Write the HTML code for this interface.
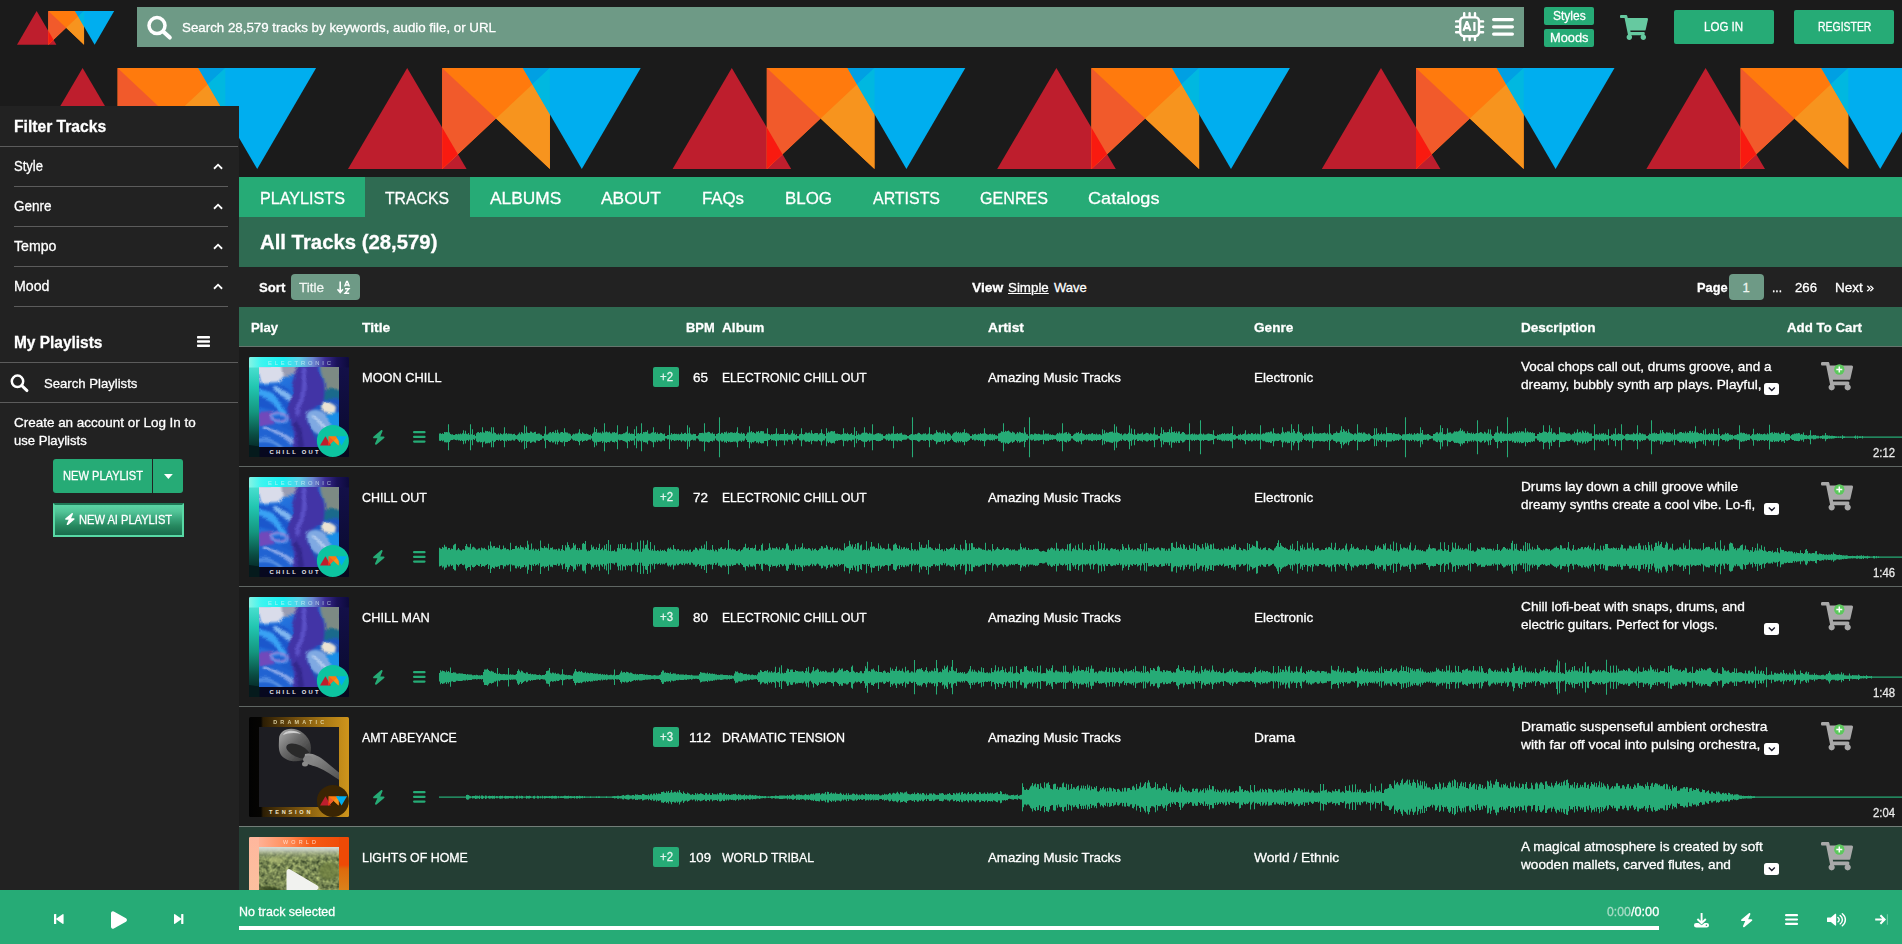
<!DOCTYPE html>
<html><head><meta charset="utf-8"><title>All Tracks</title>
<style>
*{box-sizing:border-box;margin:0;padding:0}
html,body{width:1902px;height:944px;overflow:hidden;background:#1b1b1b;color:#fff;font-family:"Liberation Sans",sans-serif;font-size:13px}
.a{position:absolute}
.t{position:absolute;white-space:nowrap;line-height:1;color:#fff;-webkit-text-stroke:.28px}
.b{font-weight:bold}
svg{position:absolute;overflow:visible}
.g{background:#26ab76}
.hl{position:absolute;height:1px;background:#5c5c5c}
.rowb{position:absolute;left:239px;width:1663px;height:1px;background:#555}
.dd{position:absolute;width:15px;height:12px;background:#fff;border-radius:2.5px}
</style></head><body>
<svg width="0" height="0"><defs>
<g id="lg">
<polygon points="0,101.4 59.2,0 118.6,101.4" fill="#be1e2d"/>
<polygon points="94.2,0 201.9,0 201.9,101.4 148,50.7 94.2,101.4" fill="#ff7a0d"/>
<polygon points="94.2,0 94.2,101.4 148,50.7" fill="#f15a2b"/>
<polygon points="201.9,0 201.9,101.4 148,50.7" fill="#f7941e"/>
<polygon points="174.9,0 292.7,0 233.8,101.4" fill="#00aeef"/>
<polygon points="94.2,59.7 94.2,101.4 109.9,86.6" fill="#f91a10"/>
<polygon points="174.9,0 201.9,0 184.4,16.4" fill="#00a0e3"/>
<polygon points="184.4,16.4 201.9,0 201.9,46.500" fill="#00b8e0"/>
</g>
<path id="cart" d="M528.12 301.319l47.273-208C578.806 78.301 567.391 64 551.99 64H159.208l-9.166-44.81C147.758 8.021 137.93 0 126.529 0H24C10.745 0 0 10.745 0 24v16c0 13.255 10.745 24 24 24h69.883l70.248 343.435C147.325 417.1 136 435.222 136 456c0 30.928 25.072 56 56 56s56-25.072 56-56c0-15.674-6.447-29.835-16.824-40h209.647C430.447 426.165 424 440.326 424 456c0 30.928 25.072 56 56 56s56-25.072 56-56c0-22.172-12.888-41.332-31.579-50.405l5.517-24.276c3.413-15.018-8.002-29.319-23.403-29.319H218.117l-6.545-32h293.145c11.206 0 20.92-7.754 23.403-18.681z"/>
<path id="bolt" d="M349.4 44.6c5.9-13.7 1.5-29.7-10.6-38.5s-28.6-8-39.9 1.8l-256 224c-10 8.800-13.6 22.900-8.9 35.300S50.7 288 64 288H175.500L98.600 467.400c-5.900 13.700-1.500 29.700 10.600 38.500s28.600 8 39.900-1.800l256-224c10-8.800 13.600-22.900 8.900-35.300s-16.600-20.700-30-20.700H272.500L349.400 44.600z"/>
<g id="bars"><rect x="0" y="0" width="12.600" height="2.300" rx="1.100"/><rect x="0" y="4.700" width="12.600" height="2.300" rx="1.100"/><rect x="0" y="9.400" width="12.600" height="2.300" rx="1.100"/></g>
<g id="addcart"><use href="#cart" transform="scale(.0556)" fill="#a9a9a9"/><circle cx="18.300" cy="7.500" r="5.200" fill="#5cc85c"/><path d="M15.300 7.500h6M18.300 4.500v6" stroke="#fff" stroke-width="1.500"/></g>
<path id="chev" d="M1 6.750L5.050 2.700L9.100 6.750" fill="none" stroke="#fff" stroke-width="1.800"/>
<path id="ddc" d="M4.800 4.500L7.800 7.500L10.800 4.500" fill="none" stroke="#1a1a2a" stroke-width="1.400"/>
</defs></svg>
<svg width="0" height="0"><defs>
<linearGradient id="e_l" x1="0" y1="0" x2="0" y2="1"><stop offset="0" stop-color="#5cecdf"/><stop offset=".3" stop-color="#22c6b1"/><stop offset=".55" stop-color="#14967f"/><stop offset=".78" stop-color="#0a4c42"/><stop offset="1" stop-color="#031416"/></linearGradient>
<linearGradient id="e_t" x1="0" y1="0" x2="1" y2="0"><stop offset="0" stop-color="#86f4e4"/><stop offset=".12" stop-color="#3ef5f0"/><stop offset=".34" stop-color="#1cf0f2"/><stop offset=".5" stop-color="#5ad2e8"/><stop offset=".64" stop-color="#6c86d2"/><stop offset=".76" stop-color="#3c2c94"/><stop offset=".88" stop-color="#1a1258"/><stop offset="1" stop-color="#0d0a3c"/></linearGradient>
<linearGradient id="e_r" x1="0" y1="0" x2="0" y2="1"><stop offset="0" stop-color="#14104c"/><stop offset="1" stop-color="#090a2c"/></linearGradient>
<linearGradient id="e_in" x1="0" y1="0" x2="1" y2="1"><stop offset="0" stop-color="#2a86ea"/><stop offset=".5" stop-color="#1d5fd0"/><stop offset="1" stop-color="#2448a8"/></linearGradient>
<filter id="bl" x="-10%" y="-10%" width="120%" height="120%"><feGaussianBlur stdDeviation="1.300"/></filter>
<filter id="mb" x="-10%" y="-10%" width="120%" height="120%" color-interpolation-filters="sRGB"><feTurbulence type="fractalNoise" baseFrequency=".045" numOctaves="2" seed="5" result="n"/><feGaussianBlur in="SourceGraphic" stdDeviation=".9" result="b"/><feDisplacementMap in="b" in2="n" scale="9" xChannelSelector="R" yChannelSelector="G"/></filter>
<filter id="bl2" x="-10%" y="-10%" width="120%" height="120%"><feGaussianBlur stdDeviation=".700"/></filter>
<clipPath id="inclip"><rect x="10" y="10" width="80" height="80"/></clipPath>
<clipPath id="artclip"><rect width="100" height="100" rx="1.500"/></clipPath>
<g id="art1" clip-path="url(#artclip)">
<rect width="100" height="100" fill="url(#e_r)"/>
<rect x="0" y="0" width="10.500" height="100" fill="url(#e_l)"/>
<rect x="0" y="0" width="100" height="10.500" fill="url(#e_t)"/>
<rect x="10" y="89.500" width="90" height="10.500" fill="#07081f"/>
<polygon points="0,100 0,88 10.500,89.500 10.500,100" fill="#051a1c"/>
<g clip-path="url(#inclip)"><rect x="10" y="10" width="80" height="80" fill="url(#e_in)"/>
<g filter="url(#mb)">
<path d="M8 8H50L46 17L35 19L30 26L12 27z" fill="#d9dcea"/>
<path d="M34 8H52L46 18L36 19z" fill="#9a9db2"/>
<path d="M8 30L34 28L44 40L40 56L8 50z" fill="#1b57cc"/>
<path d="M10 33C22 35 32 44 40 54L36 57C28 48 20 42 8 40z" fill="#39a2f4"/>
<path d="M24 30C32 30 38 34 42 40L40 44C34 38 30 36 22 34z" fill="#7fb6f0"/>
<path d="M8 55L24 54L26 70L8 72z" fill="#7149ba"/>
<path d="M8 70L30 66L44 78L50 92H8z" fill="#2163d2"/>
<path d="M12 72C26 72 38 80 48 90" stroke="#a9bdf0" stroke-width="2.600" fill="none"/>
<path d="M10 84C20 82 28 86 34 92" stroke="#6ea4ec" stroke-width="2" fill="none"/>
<path d="M50 8C46 18 42 26 42 34C40 42 40 52 42 64C43 74 43 82 44 92H70C68 84 66 80 62 74C58 68 57 62 60 56C66 52 74 48 74.500 42C76 36 76 30 74 24C72 18 70 14 70 8z" fill="#4234a6"/>
<path d="M56 10C52 26 54 44 50 60" stroke="#5a50c6" stroke-width="5" fill="none"/>
<path d="M46 66C50 74 48 84 52 92" stroke="#33278c" stroke-width="6" fill="none"/>
<path d="M72 8H92V34H76C77 26 72 16 72 8z" fill="#7c8a84"/>
<path d="M76 34H92V42H75z" fill="#1a6a8c"/>
<path d="M74 45C80 44 86 46 89 50L88 56C82 57 76 56 73 52z" fill="#ece3d2"/>
<path d="M60 56C66 52 74 54 80 58L82 74C76 80 68 78 64 74C60 70 56 62 60 56z" fill="#7fa9e2"/>
<path d="M64 60C70 62 74 70 78 76" stroke="#dbe8f8" stroke-width="1.800" fill="none"/>
<path d="M78 57L92 55V71L82 72z" fill="#1a8fe8"/>
<path d="M70 78L92 72V92H70z" fill="#3a52b8"/>
<ellipse cx="31.500" cy="58.500" rx="8.500" ry="4.200" fill="none" stroke="#b08ad8" stroke-width="1.700"/>
<ellipse cx="31.500" cy="60.500" rx="8.500" ry="4.200" fill="none" stroke="#5f9ff0" stroke-width="1.300"/>
</g></g>
<text x="19" y="7.700" font-family="Liberation Sans,sans-serif" font-size="5.800" fill="#d8f6f6" opacity=".7" textLength="63" lengthAdjust="spacing">ELECTRONIC</text>
<text x="20.600" y="97.300" font-family="Liberation Sans,sans-serif" font-weight="bold" font-size="5.800" fill="#e8e8f0" textLength="49" lengthAdjust="spacing">CHILL OUT</text>
</g>

<linearGradient id="d_bg" x1="0" y1="0" x2="1" y2="0"><stop offset="0" stop-color="#020202"/><stop offset=".12" stop-color="#050402"/><stop offset=".14" stop-color="#2b1d04"/><stop offset=".45" stop-color="#6e4b0c"/><stop offset=".75" stop-color="#a87814"/><stop offset="1" stop-color="#cf951c"/></linearGradient>
<linearGradient id="d_bowl" x1="0" y1="0" x2="1" y2="1"><stop offset="0" stop-color="#b0b0b0"/><stop offset=".45" stop-color="#6a6a6a"/><stop offset="1" stop-color="#2e2e2e"/></linearGradient>
<linearGradient id="d_arm" x1="0" y1="0" x2="1" y2="1"><stop offset="0" stop-color="#989898"/><stop offset="1" stop-color="#4e4e4e"/></linearGradient>
<g id="art2" clip-path="url(#artclip)">
<rect width="100" height="100" fill="url(#d_bg)"/>
<rect x="10" y="10" width="80" height="80" fill="#1d1d22"/>
<g clip-path="url(#inclip)" filter="url(#bl2)">
<path d="M30 22C30 12 44 8 54 16C62 22 64 32 60 40C52 46 38 46 32 38C29 33 30 27 30 22z" fill="url(#d_bowl)"/>
<ellipse cx="49" cy="34" rx="12.500" ry="6" fill="#29292b" transform="rotate(24 49 34)"/>
<path d="M34 18C36 13 46 12 52 17C46 15 38 16 34 18z" fill="#cfcfcf"/>
<path d="M56 37C62 35 70 39 76 44C82 49 88 54 92 57L92 64C84 59 76 53 68 50C62 48 57 47 55 44z" fill="url(#d_arm)"/>
<ellipse cx="59" cy="42.500" rx="5" ry="4" fill="#858585"/>
<ellipse cx="56" cy="47" rx="3" ry="2.500" fill="#8a8a8a"/>
</g>
<text x="24.200" y="6.900" font-family="Liberation Sans,sans-serif" font-weight="bold" font-size="5.400" fill="#e6dcae" opacity=".9" textLength="51" lengthAdjust="spacing">DRAMATIC</text>
<text x="20" y="96.500" font-family="Liberation Sans,sans-serif" font-weight="bold" font-size="5.600" fill="#efe6c8" textLength="41.500" lengthAdjust="spacing">TENSION</text>
</g>

<linearGradient id="w_bg" x1="0" y1="0" x2="1" y2="0"><stop offset="0" stop-color="#ffb79d"/><stop offset=".12" stop-color="#ffae90"/><stop offset=".4" stop-color="#ff8a55"/><stop offset=".62" stop-color="#f65a14"/><stop offset="1" stop-color="#ee4a06"/></linearGradient>
<linearGradient id="w_r" x1="0" y1="0" x2="0" y2="1"><stop offset="0" stop-color="#ee4a06"/><stop offset=".28" stop-color="#ee4a06"/><stop offset=".32" stop-color="#de6a0c"/><stop offset=".6" stop-color="#d98a20"/><stop offset="1" stop-color="#d0a030"/></linearGradient>
<linearGradient id="w_l" x1="0" y1="0" x2="0" y2="1"><stop offset="0" stop-color="#ffb79d"/><stop offset="1" stop-color="#f8c8a0"/></linearGradient>
<linearGradient id="w_sky" x1="0" y1="0" x2="0" y2="1"><stop offset="0" stop-color="#d6ddd8"/><stop offset=".22" stop-color="#c9d1c4" stop-opacity=".9"/><stop offset=".6" stop-color="#a9b48c" stop-opacity=".45"/><stop offset="1" stop-color="#8d9b62" stop-opacity="0"/></linearGradient>
<filter id="fo" x="0" y="0" width="1" height="1" color-interpolation-filters="sRGB"><feTurbulence type="fractalNoise" baseFrequency=".25" numOctaves="3" seed="7" result="n"/><feColorMatrix in="n" type="matrix" values=".7 0 0 0 .12  .7 0 0 0 .18  .45 0 0 0 .1  0 0 0 0 1" result="c"/><feComposite in="c" in2="SourceGraphic" operator="in"/></filter>
<g id="art3" clip-path="url(#artclip)">
<rect width="100" height="100" fill="url(#w_bg)"/>
<rect x="0" y="0" width="10" height="100" fill="url(#w_l)"/>
<rect x="90" y="0" width="10" height="100" fill="url(#w_r)"/>
<rect x="10" y="10" width="80" height="80" fill="#7b8957" filter="url(#fo)"/>
<rect x="10" y="10" width="80" height="14" fill="url(#w_sky)"/>
<g clip-path="url(#inclip)" filter="url(#bl)" opacity=".75">
<ellipse cx="20" cy="58" rx="14" ry="9" fill="#2a3a16"/>
<ellipse cx="27" cy="23" rx="8" ry="3" fill="#b3bf78"/>
<ellipse cx="55" cy="50" rx="10" ry="8" fill="#3a4a22"/>
<ellipse cx="80" cy="34" rx="10" ry="9" fill="#6f8040"/>
</g>
<text x="34" y="7.400" font-family="Liberation Sans,sans-serif" font-size="5.400" fill="#ffe4d6" opacity=".9" textLength="33" lengthAdjust="spacing">WORLD</text>
<path d="M37.500 34.500a2.500 2.500 0 0 1 3.800-2.100l27 16a2.500 2.500 0 0 1 0 4.300l-27 16a2.500 2.500 0 0 1-3.800-2.100z" fill="#f1f2ef"/>
</g>
<g id="badge1"><circle cx="83.900" cy="83.900" r="16" fill="#0cc4a0"/><use href="#lg" transform="translate(71,79.200) scale(.0922)"/></g>
<g id="badge2"><circle cx="83.900" cy="83.900" r="16" fill="#3a2503"/><use href="#lg" transform="translate(71,79.200) scale(.0922)"/></g>
</defs></svg>
<!-- header -->
<svg style="left:17.200px;top:10.500px" width="97.200" height="33.700" viewBox="0 0 292.700 101.400"><use href="#lg"/></svg>
<div class="a" style="left:137px;top:7px;width:1387px;height:40px;background:#6e9a86"></div>
<svg style="left:146px;top:15px" width="27" height="26" viewBox="0 0 27 26"><circle cx="11" cy="10.600" r="8" fill="none" stroke="#fff" stroke-width="3.500"/><path d="M17.200 16.600l6.600 6" stroke="#fff" stroke-width="4" stroke-linecap="round"/></svg>
<svg style="left:1455px;top:12px" width="29" height="29" viewBox="0 0 29 29" fill="none" stroke="#fff" stroke-width="2.400">
<rect x="5.200" y="5.400" width="18.800" height="18.800" rx="3.600"/>
<path d="M9.200 4.200V1.100M14.600 4.200V1.100M20 4.200V1.100M9.200 28.100V25.200M14.600 28.100V25.200M20 28.100V25.200M4 9.400H1.100M4 14.800H1.100M4 20.200H1.100M28.100 9.400H25.200M28.100 14.800H25.200M28.100 20.200H25.200" stroke-linecap="round"/>
<path d="M8.400 18.900l3.300-8.800h.5l3.300 8.800M9.700 16.200h4.500M19.400 9.900v9" stroke-width="2.200"/></svg>
<svg style="left:1492px;top:18px" width="22" height="18" viewBox="0 0 22 18" fill="#fff"><rect y="0" width="22" height="3.200" rx="1.600"/><rect y="7.200" width="22" height="3.200" rx="1.600"/><rect y="14.500" width="22" height="3.200" rx="1.600"/></svg>
<div class="a g" style="left:1544px;top:7px;width:50px;height:18px;border-radius:2px"></div>
<div class="a g" style="left:1544px;top:29px;width:50px;height:18px;border-radius:2px"></div>
<svg style="left:1620px;top:14.700px" width="28" height="24.900" viewBox="0 0 576 512"><use href="#cart" fill="#66c9a0"/></svg>
<div class="a g" style="left:1674px;top:10px;width:100px;height:34px;border-radius:2px"></div>
<div class="a g" style="left:1794px;top:10px;width:100px;height:34px;border-radius:2px"></div>
<!-- banner -->
<svg style="left:0;top:0" width="1902" height="177" viewBox="0 0 1902 177"><use href="#lg" transform="translate(23.4,68) scale(1,.996)"/><use href="#lg" transform="translate(348.0,68) scale(1,.996)"/><use href="#lg" transform="translate(672.6,68) scale(1,.996)"/><use href="#lg" transform="translate(997.2,68) scale(1,.996)"/><use href="#lg" transform="translate(1321.8,68) scale(1,.996)"/><use href="#lg" transform="translate(1646.4,68) scale(1,.996)"/></svg>
<!-- main bars -->
<div class="a g" style="left:239px;top:177px;width:1663px;height:40px"></div>
<div class="a" style="left:365px;top:177px;width:105px;height:40px;background:#2f6b52"></div>
<div class="a" style="left:239px;top:217px;width:1663px;height:50px;background:#2f6b52"></div>
<div class="a" style="left:239px;top:267px;width:1663px;height:40px;background:#222"></div>
<div class="a" style="left:291px;top:274px;width:69px;height:26px;background:#6e9a86;border-radius:4px"></div>
<svg style="left:337px;top:280.500px" width="15" height="13" viewBox="0 0 15 13"><path d="M3.200 0.500v11M0.500 8.300l2.700 3.200l2.700-3.200" fill="none" stroke="#fff" stroke-width="1.600"/><path d="M7.600 5.600l2-5.200h.8l2 5.200M8.400 4h3.200" fill="none" stroke="#fff" stroke-width="1.300"/><path d="M8 7.700h4l-4 4.600h4.200" fill="none" stroke="#fff" stroke-width="1.400"/></svg>
<div class="a" style="left:1729px;top:274px;width:35px;height:26px;background:#6e9a86;border-radius:4px"></div>
<div class="a" style="left:239px;top:307px;width:1663px;height:39px;background:#2f6b52"></div>
<div class="a" style="left:239px;top:346px;width:1663px;height:1px;background:#66756d"></div>
<!-- rows -->
<div class="a" style="left:239px;top:827px;width:1663px;height:63px;background:#243e34"></div>
<div class="rowb" style="top:466px;background:#5f6663"></div>
<svg style="left:249px;top:357px" width="100" height="100" viewBox="0 0 100 100"><use href="#art1"/><use href="#badge1"/></svg>
<div class="a g" style="left:653px;top:367px;width:26px;height:20px;border-radius:2px"></div>
<svg style="left:373.400px;top:429.5px" width="11.600" height="14.800" viewBox="30 0 388 512" preserveAspectRatio="none"><use href="#bolt" fill="#26ab76"/></svg>
<svg style="left:412.800px;top:431.3px" width="12.600" height="11.600" fill="#26ab76"><use href="#bars"/></svg>
<div class="dd" style="left:1763.600px;top:383.4px"></div><svg style="left:1763.600px;top:383.4px" width="15" height="12"><use href="#ddc"/></svg>
<svg style="left:1821.300px;top:361.8px" width="32" height="29"><use href="#addcart"/></svg>
<div class="rowb" style="top:586px;background:#5f6663"></div>
<svg style="left:249px;top:477px" width="100" height="100" viewBox="0 0 100 100"><use href="#art1"/><use href="#badge1"/></svg>
<div class="a g" style="left:653px;top:487px;width:26px;height:20px;border-radius:2px"></div>
<svg style="left:373.400px;top:549.5px" width="11.600" height="14.800" viewBox="30 0 388 512" preserveAspectRatio="none"><use href="#bolt" fill="#26ab76"/></svg>
<svg style="left:412.800px;top:551.3px" width="12.600" height="11.600" fill="#26ab76"><use href="#bars"/></svg>
<div class="dd" style="left:1763.600px;top:503.4px"></div><svg style="left:1763.600px;top:503.4px" width="15" height="12"><use href="#ddc"/></svg>
<svg style="left:1821.300px;top:481.8px" width="32" height="29"><use href="#addcart"/></svg>
<div class="rowb" style="top:706px;background:#5f6663"></div>
<svg style="left:249px;top:597px" width="100" height="100" viewBox="0 0 100 100"><use href="#art1"/><use href="#badge1"/></svg>
<div class="a g" style="left:653px;top:607px;width:26px;height:20px;border-radius:2px"></div>
<svg style="left:373.400px;top:669.5px" width="11.600" height="14.800" viewBox="30 0 388 512" preserveAspectRatio="none"><use href="#bolt" fill="#26ab76"/></svg>
<svg style="left:412.800px;top:671.3px" width="12.600" height="11.600" fill="#26ab76"><use href="#bars"/></svg>
<div class="dd" style="left:1763.600px;top:623.4px"></div><svg style="left:1763.600px;top:623.4px" width="15" height="12"><use href="#ddc"/></svg>
<svg style="left:1821.300px;top:601.8px" width="32" height="29"><use href="#addcart"/></svg>
<div class="rowb" style="top:826px;background:#727d78"></div>
<svg style="left:249px;top:717px" width="100" height="100" viewBox="0 0 100 100"><use href="#art2"/><use href="#badge2"/></svg>
<div class="a g" style="left:653px;top:727px;width:26px;height:20px;border-radius:2px"></div>
<svg style="left:373.400px;top:789.5px" width="11.600" height="14.800" viewBox="30 0 388 512" preserveAspectRatio="none"><use href="#bolt" fill="#26ab76"/></svg>
<svg style="left:412.800px;top:791.3px" width="12.600" height="11.600" fill="#26ab76"><use href="#bars"/></svg>
<div class="dd" style="left:1763.600px;top:743.4px"></div><svg style="left:1763.600px;top:743.4px" width="15" height="12"><use href="#ddc"/></svg>
<svg style="left:1821.300px;top:721.8px" width="32" height="29"><use href="#addcart"/></svg>
<svg style="left:249px;top:837px" width="100" height="100" viewBox="0 0 100 100"><use href="#art3"/></svg>
<div class="a g" style="left:653px;top:847px;width:26px;height:20px;border-radius:2px"></div>
<div class="dd" style="left:1763.600px;top:863.4px"></div><svg style="left:1763.600px;top:863.4px" width="15" height="12"><use href="#ddc"/></svg>
<svg style="left:1821.300px;top:841.8px" width="32" height="29"><use href="#addcart"/></svg>
<!-- waveforms -->
<svg style="left:0;top:0" width="1902" height="944"><g transform="translate(439.5,437.2)"><path d="M-0.500 0H1463" stroke="#26ab76" stroke-width="1.300"/><path d="M0-3.6V3.6M1-3.9V3.9M2-3.1V3.1M3-4V4M4-3.2V3.2M5-5.1V5.1M6-5V5M7-5.2V5.2M8-5V5M9-13V13M10-4.8V4.8M11-3.3V3.3M12-2.8V2.8M13-2.9V2.9M14-2.3V2.3M15-2.3V2.3M16-2.9V2.9M17-3.1V3.1M18-2.6V2.6M19-3.4V3.4M20-3V3M21-3.7V3.7M22-3V3M23-3.9V3.9M24-7V7M25-3.5V3.5M26-6.4V6.4M27-3.4V3.4M28-2.9V2.9M29-4.1V4.1M30-2.5V2.5M31-13V13M32-3V3M33-8V8M34-2.1V2.1M35-2.7V2.7M36-1.2V1.2M37-4V4M38-5V5M39-5.1V5.1M40-4.2V4.2M41-5.3V5.3M42-4.7V4.7M43-10V10M44-5V5M45-4.4V4.4M46-6.5V6.5M47-6V6M48-6.1V6.1M49-5.5V5.5M50-6V6M51-5V5M52-10V10M53-3.6V3.6M54-10V10M55-4.8V4.8M56-4.1V4.1M57-2.9V2.9M58-2.8V2.8M59-3.6V3.6M60-2.5V2.5M61-3.9V3.9M62-3.2V3.2M63-2.7V2.7M64-3.8V3.8M65-10V10M66-3.5V3.5M67-4.3V4.3M68-2.9V2.9M69-3.8V3.8M70-3.4V3.4M71-3.5V3.5M72-3.4V3.4M73-2.6V2.6M74-3.2V3.2M75-3.5V3.5M76-2.3V2.3M77-1.8V1.8M78-2.5V2.5M79-3.5V3.5M80-4.7V4.7M81-3V3M82-5.2V5.2M83-4.4V4.4M84-3.5V3.5M85-12V12M86-3.9V3.9M87-10.8V10.8M88-4.8V4.8M89-4.2V4.2M90-4.1V4.1M91-5.7V5.7M92-5.4V5.4M93-4.5V4.5M94-4.4V4.4M95-5.1V5.1M96-5.5V5.5M97-3.3V3.3M98-3.4V3.4M99-3.7V3.7M100-3.8V3.8M101-2.7V2.7M102-2.5V2.5M103-1.2V1.2M104-1.2V1.2M105-3.5V3.5M106-11V11M107-2.7V2.7M108-2.8V2.8M109-3.8V3.8M110-4.8V4.8M111-5.1V5.1M112-3.9V3.9M113-5.2V5.2M114-5.4V5.4M115-4.2V4.2M116-7V7M117-4.2V4.2M118-7.4V7.4M119-4.7V4.7M120-3.5V3.5M121-4.8V4.8M122-5.1V5.1M123-5.3V5.3M124-4.1V4.1M125-9V9M126-4.9V4.9M127-4.7V4.7M128-4.7V4.7M129-3.7V3.7M130-3.7V3.7M131-2.9V2.9M132-1.2V1.2M133-2.4V2.4M134-3.4V3.4M135-3V3M136-3.8V3.8M137-3.6V3.6M138-3.7V3.7M139-4.8V4.8M140-8V8M141-3.9V3.9M142-3.2V3.2M143-4.9V4.9M144-3.9V3.9M145-3.5V3.5M146-3.1V3.1M147-3.8V3.8M148-3.3V3.3M149-2.6V2.6M150-2.3V2.3M151-2.6V2.6M152-1.2V1.2M153-3.5V3.5M154-4.6V4.6M155-10V10M156-5.2V5.2M157-8.3V8.3M158-4.5V4.5M159-4.8V4.8M160-4.5V4.5M161-4.6V4.6M162-3.8V3.8M163-5.8V5.8M164-4.4V4.4M165-14V14M166-5V5M167-5.7V5.7M168-4.9V4.9M169-4.7V4.7M170-5.4V5.4M171-4V4M172-3.6V3.6M173-4.9V4.9M174-4.7V4.7M175-5.3V5.3M176-4.1V4.1M177-4.7V4.7M178-12V12M179-2.6V2.6M180-3.3V3.3M181-3V3M182-2.9V2.9M183-3.2V3.2M184-3.9V3.9M185-4V4M186-4.6V4.6M187-5.4V5.4M188-11V11M189-3.7V3.7M190-4.5V4.5M191-3.1V3.1M192-3.8V3.8M193-3.4V3.4M194-3.3V3.3M195-8V8M196-1.2V1.2M197-11V11M198-3.6V3.6M199-4.2V4.2M200-3.3V3.3M201-4.1V4.1M202-14V14M203-3.5V3.5M204-5.1V5.1M205-4.9V4.9M206-5.4V5.4M207-5.2V5.2M208-7V7M209-3.6V3.6M210-3.4V3.4M211-3.8V3.8M212-4.4V4.4M213-5V5M214-10V10M215-4.5V4.5M216-5.1V5.1M217-3.4V3.4M218-4.7V4.7M219-3.2V3.2M220-3.5V3.5M221-4.4V4.4M222-4.2V4.2M223-3.4V3.4M224-3V3M225-3.7V3.7M226-1.2V1.2M227-1.2V1.2M228-2.3V2.3M229-2.1V2.1M230-12V12M231-2.5V2.5M232-4.1V4.1M233-2.9V2.9M234-3.1V3.1M235-3.7V3.7M236-3.2V3.2M237-3.4V3.4M238-2.9V2.9M239-3.5V3.5M240-2.8V2.8M241-3.2V3.2M242-4.6V4.6M243-3.4V3.4M244-3.3V3.3M245-4.1V4.1M246-4.5V4.5M247-3.3V3.3M248-12V12M249-4V4M250-9.6V9.6M251-3.6V3.6M252-2.7V2.7M253-2.6V2.6M254-3.4V3.4M255-3.1V3.1M256-3.2V3.2M257-1.2V1.2M258-1.2V1.2M259-2.4V2.4M260-4.1V4.1M261-4.1V4.1M262-4.1V4.1M263-4.5V4.5M264-4V4M265-14V14M266-4.6V4.6M267-4.4V4.4M268-4.9V4.9M269-5.4V5.4M270-5.1V5.1M271-3.9V3.9M272-3.7V3.7M273-4.6V4.6M274-3.2V3.2M275-3.5V3.5M276-1.2V1.2M277-3.1V3.1M278-3.5V3.5M279-4.3V4.3M280-20V20M281-3.3V3.3M282-4.4V4.4M283-4.5V4.5M284-3.5V3.5M285-5.2V5.2M286-4.6V4.6M287-5.7V5.7M288-3.8V3.8M289-4.7V4.7M290-4.2V4.2M291-5V5M292-4.9V4.9M293-4.7V4.7M294-4.2V4.2M295-4.6V4.6M296-4.2V4.2M297-5.4V5.4M298-10V10M299-4.2V4.2M300-3.6V3.6M301-3.5V3.5M302-4.8V4.8M303-3.3V3.3M304-4.1V4.1M305-3.4V3.4M306-1.2V1.2M307-2.9V2.9M308-4.8V4.8M309-4.7V4.7M310-11V11M311-5V5M312-6.3V6.3M313-4.7V4.7M314-5.3V5.3M315-4.3V4.3M316-3.8V3.8M317-5.6V5.6M318-5.1V5.1M319-6.3V6.3M320-4.5V4.5M321-5.9V5.9M322-6.3V6.3M323-6V6M324-6V6M325-3.8V3.8M326-3.7V3.7M327-3.7V3.7M328-9V9M329-3.1V3.1M330-2.9V2.9M331-1.9V1.9M332-3.3V3.3M333-2.7V2.7M334-3.2V3.2M335-3.1V3.1M336-3.7V3.7M337-9V9M338-3.2V3.2M339-3.6V3.6M340-2.8V2.8M341-3.2V3.2M342-3.1V3.1M343-3.3V3.3M344-3.3V3.3M345-8V8M346-3.3V3.3M347-3.3V3.3M348-4.2V4.2M349-2.6V2.6M350-2.5V2.5M351-2.6V2.6M352-3.9V3.9M353-7V7M354-3.4V3.4M355-3.6V3.6M356-2.3V2.3M357-3.1V3.1M358-1.2V1.2M359-1.2V1.2M360-3V3M361-3.4V3.4M362-9V9M363-3.3V3.3M364-2.6V2.6M365-3.2V3.2M366-4.6V4.6M367-4.6V4.6M368-4V4M369-4.5V4.5M370-4.8V4.8M371-3.6V3.6M372-7V7M373-3.9V3.9M374-3.2V3.2M375-4V4M376-4.1V4.1M377-4.2V4.2M378-4.1V4.1M379-2.8V2.8M380-3.8V3.8M381-4.2V4.2M382-8V8M383-4V4M384-3V3M385-3.2V3.2M386-1.2V1.2M387-9V9M388-4.2V4.2M389-5.7V5.7M390-4.6V4.6M391-5.6V5.6M392-6.3V6.3M393-5.9V5.9M394-5.6V5.6M395-6.3V6.3M396-3.7V3.7M397-3.4V3.4M398-3.8V3.8M399-3.1V3.1M400-3.1V3.1M401-2.8V2.8M402-2.6V2.6M403-3.3V3.3M404-9V9M405-3.6V3.6M406-3.9V3.9M407-3.2V3.2M408-4.4V4.4M409-3.2V3.2M410-2.8V2.8M411-3.2V3.2M412-4.1V4.1M413-2.5V2.5M414-2.5V2.5M415-10V10M416-1.2V1.2M417-6.1V6.1M418-2.1V2.1M419-3.6V3.6M420-2.7V2.7M421-2.7V2.7M422-3.8V3.8M423-4.4V4.4M424-4.5V4.5M425-10V10M426-4.5V4.5M427-4.7V4.7M428-3.9V3.9M429-3.1V3.1M430-4.5V4.5M431-3.6V3.6M432-3.4V3.4M433-13V13M434-2.8V2.8M435-2.7V2.7M436-3.1V3.1M437-3.7V3.7M438-3.9V3.9M439-4.1V4.1M440-3.7V3.7M441-3.7V3.7M442-3V3M443-2.9V2.9M444-1.2V1.2M445-1.2V1.2M446-2V2M447-3.3V3.3M448-2.6V2.6M449-3.8V3.8M450-3.4V3.4M451-2.6V2.6M452-3.8V3.8M453-3.6V3.6M454-11V11M455-3.3V3.3M456-3.4V3.4M457-3.5V3.5M458-4.2V4.2M459-3.1V3.1M460-3.6V3.6M461-3.9V3.9M462-4.4V4.4M463-2.7V2.7M464-2.5V2.5M465-2.6V2.6M466-2.5V2.5M467-2.2V2.2M468-1.2V1.2M469-1.2V1.2M470-2.2V2.2M471-2.8V2.8M472-3.3V3.3M473-20V20M474-2.8V2.8M475-2.7V2.7M476-3.1V3.1M477-3V3M478-3.7V3.7M479-4.5V4.5M480-4.2V4.2M481-3.2V3.2M482-2.8V2.8M483-2.9V2.9M484-3.6V3.6M485-3.4V3.4M486-3.9V3.9M487-2.7V2.7M488-2.9V2.9M489-3.6V3.6M490-10V10M491-2.9V2.9M492-3.2V3.2M493-2.4V2.4M494-2.8V2.8M495-3.8V3.8M496-4V4M497-7V7M498-5.2V5.2M499-4.5V4.5M500-4.9V4.9M501-4.8V4.8M502-3.5V3.5M503-4.6V4.6M504-3.9V3.9M505-7V7M506-3.4V3.4M507-3V3M508-4.6V4.6M509-4.1V4.1M510-3.8V3.8M511-2.7V2.7M512-1.2V1.2M513-2.8V2.8M514-4V4M515-4.8V4.8M516-5V5M517-5.6V5.6M518-4.1V4.1M519-5.3V5.3M520-3.9V3.9M521-5V5M522-3.9V3.9M523-5V5M524-4.9V4.9M525-8V8M526-4.2V4.2M527-4.8V4.8M528-4V4M529-3.6V3.6M530-2.7V2.7M531-1.2V1.2M532-1.2V1.2M533-2.9V2.9M534-2.4V2.4M535-3.2V3.2M536-3.4V3.4M537-2.5V2.5M538-2.7V2.7M539-3.5V3.5M540-2.9V2.9M541-4.1V4.1M542-3.1V3.1M543-3.8V3.8M544-3.8V3.8M545-9V9M546-4V4M547-3.1V3.1M548-2.6V2.6M549-2.5V2.5M550-3.1V3.1M551-3.4V3.4M552-2.7V2.7M553-3.5V3.5M554-2.5V2.5M555-3.2V3.2M556-1.9V1.9M557-2V2M558-1.2V1.2M559-3.7V3.7M560-4V4M561-4.4V4.4M562-5.9V5.9M563-5.4V5.4M564-14V14M565-5.2V5.2M566-6.5V6.5M567-5.6V5.6M568-6.3V6.3M569-6.7V6.7M570-5.7V5.7M571-5V5M572-4.3V4.3M573-5.7V5.7M574-4.9V4.9M575-4.4V4.4M576-2.9V2.9M577-3.8V3.8M578-5.2V5.2M579-3.9V3.9M580-5.5V5.5M581-5V5M582-4.2V4.2M583-4.5V4.5M584-3.7V3.7M585-10V10M586-4.8V4.8M587-2.9V2.9M588-3V3M589-1.2V1.2M590-20V20M591-2.6V2.6M592-3.2V3.2M593-3V3M594-2.4V2.4M595-3.7V3.7M596-3.6V3.6M597-3.3V3.3M598-3V3M599-3.5V3.5M600-3.2V3.2M601-2.7V2.7M602-2.7V2.7M603-2.6V2.6M604-7V7M605-2.9V2.9M606-3.6V3.6M607-3.5V3.5M608-3.4V3.4M609-3.8V3.8M610-2.5V2.5M611-2.9V2.9M612-2.3V2.3M613-2.7V2.7M614-2.1V2.1M615-2V2M616-1.9V1.9M617-3V3M618-4.2V4.2M619-3.5V3.5M620-4.8V4.8M621-3.8V3.8M622-4V4M623-14V14M624-3.6V3.6M625-4.5V4.5M626-4.8V4.8M627-5.2V5.2M628-3.2V3.2M629-4.6V4.6M630-3.8V3.8M631-3.3V3.3M632-1.2V1.2M633-1.2V1.2M634-2.5V2.5M635-3.4V3.4M636-3.7V3.7M637-4.7V4.7M638-4.2V4.2M639-5.1V5.1M640-3.5V3.5M641-4.3V4.3M642-7V7M643-3.6V3.6M644-3.5V3.5M645-2.9V2.9M646-2.3V2.3M647-3.1V3.1M648-2.4V2.4M649-3.3V3.3M650-3.4V3.4M651-3V3M652-3.8V3.8M653-4.1V4.1M654-3V3M655-3.3V3.3M656-2.8V2.8M657-3.8V3.8M658-2.7V2.7M659-2.8V2.8M660-3.1V3.1M661-2.8V2.8M662-1.9V1.9M663-8V8M664-3.4V3.4M665-7V7M666-3.9V3.9M667-5V5M668-4.5V4.5M669-4.5V4.5M670-5.1V5.1M671-5.4V5.4M672-5.5V5.5M673-5.7V5.7M674-4.5V4.5M675-13V13M676-4.4V4.4M677-10.6V10.6M678-5V5M679-4.3V4.3M680-3.9V3.9M681-3.1V3.1M682-3.8V3.8M683-2V2M684-3V3M685-3.6V3.6M686-3.7V3.7M687-2.9V2.9M688-3.3V3.3M689-4.5V4.5M690-12V12M691-3.8V3.8M692-8.6V8.6M693-3.1V3.1M694-2.4V2.4M695-8V8M696-2.7V2.7M697-2.1V2.1M698-3.7V3.7M699-3.7V3.7M700-3.1V3.1M701-3.5V3.5M702-3.6V3.6M703-4.6V4.6M704-2.8V2.8M705-3.3V3.3M706-3.6V3.6M707-4.4V4.4M708-4.2V4.2M709-3.6V3.6M710-2.7V2.7M711-3.9V3.9M712-3.4V3.4M713-2.8V2.8M714-3.6V3.6M715-10V10M716-2.7V2.7M717-2.5V2.5M718-2.6V2.6M719-1.2V1.2M720-1.2V1.2M721-4V4M722-10V10M723-3.2V3.2M724-7.4V7.4M725-4.9V4.9M726-5V5M727-4.7V4.7M728-5.3V5.3M729-5.1V5.1M730-8V8M731-4.4V4.4M732-10.5V10.5M733-5.3V5.3M734-5V5M735-5.9V5.9M736-4.2V4.2M737-5.6V5.6M738-3.9V3.9M739-5.6V5.6M740-5.7V5.7M741-3.3V3.3M742-3.9V3.9M743-5.3V5.3M744-5.1V5.1M745-4.2V4.2M746-3V3M747-2.6V2.6M748-2.8V2.8M749-2.9V2.9M750-14V14M751-2.6V2.6M752-3.2V3.2M753-3.6V3.6M754-2.7V2.7M755-3.8V3.8M756-2.8V2.8M757-3V3M758-2.5V2.5M759-2.7V2.7M760-3.5V3.5M761-17V17M762-3.5V3.5M763-2.8V2.8M764-3.8V3.8M765-2.7V2.7M766-2.8V2.8M767-2.9V2.9M768-3.4V3.4M769-3.7V3.7M770-3.5V3.5M771-3.3V3.3M772-3.1V3.1M773-2.8V2.8M774-7V7M775-1.9V1.9M776-1.2V1.2M777-1.2V1.2M778-2.8V2.8M779-2.2V2.2M780-2.9V2.9M781-2.6V2.6M782-3.2V3.2M783-4V4M784-3.3V3.3M785-4.1V4.1M786-3V3M787-3.5V3.5M788-3.6V3.6M789-3.7V3.7M790-3.1V3.1M791-4V4M792-4.2V4.2M793-11V11M794-2.3V2.3M795-2.9V2.9M796-2.4V2.4M797-1.2V1.2M798-1.2V1.2M799-2.6V2.6M800-2.4V2.4M801-3.4V3.4M802-2.1V2.1M803-2.9V2.9M804-3.1V3.1M805-3.7V3.7M806-7V7M807-2.7V2.7M808-3V3M809-3.8V3.8M810-3.2V3.2M811-3V3M812-4.2V4.2M813-4V4M814-3V3M815-3.3V3.3M816-3.9V3.9M817-2.6V2.6M818-3.6V3.6M819-3.5V3.5M820-3V3M821-12V12M822-2.6V2.6M823-3.5V3.5M824-4V4M825-3.5V3.5M826-4.5V4.5M827-5V5M828-4.7V4.7M829-5.3V5.3M830-4.8V4.8M831-5.8V5.8M832-5.6V5.6M833-3.8V3.8M834-9V9M835-4.2V4.2M836-3.6V3.6M837-3.5V3.5M838-3.8V3.8M839-3.9V3.9M840-3.1V3.1M841-3V3M842-4.5V4.5M843-10V10M844-5.4V5.4M845-4V4M846-5.3V5.3M847-4.6V4.6M848-6V6M849-5.6V5.6M850-5.7V5.7M851-4.1V4.1M852-13V13M853-4.8V4.8M854-8.3V8.3M855-6.1V6.1M856-4V4M857-3.7V3.7M858-5.5V5.5M859-13V13M860-5.4V5.4M861-4.1V4.1M862-4.7V4.7M863-2.7V2.7M864-1.2V1.2M865-2.9V2.9M866-3V3M867-3.7V3.7M868-2.9V2.9M869-3.4V3.4M870-4.5V4.5M871-3.3V3.3M872-3.6V3.6M873-11V11M874-5V5M875-3.3V3.3M876-4.4V4.4M877-3.8V3.8M878-3.8V3.8M879-3.5V3.5M880-4V4M881-4.2V4.2M882-3.8V3.8M883-4V4M884-4.2V4.2M885-4.6V4.6M886-3.9V3.9M887-3.5V3.5M888-4.5V4.5M889-2.9V2.9M890-13V13M891-3.9V3.9M892-2.6V2.6M893-2.3V2.3M894-3.6V3.6M895-3.9V3.9M896-4.2V4.2M897-5.7V5.7M898-4.5V4.5M899-4.2V4.2M900-4.5V4.5M901-6.7V6.7M902-11V11M903-5.1V5.1M904-8.1V8.1M905-6.8V6.8M906-5.5V5.5M907-6.2V6.2M908-4.5V4.5M909-8V8M910-5V5M911-3.9V3.9M912-3.7V3.7M913-3.2V3.2M914-2.5V2.5M915-3.7V3.7M916-4V4M917-2.9V2.9M918-13V13M919-4.4V4.4M920-4.8V4.8M921-4.2V4.2M922-4.6V4.6M923-3.5V3.5M924-4.7V4.7M925-4.7V4.7M926-3.7V3.7M927-3.3V3.3M928-2.7V2.7M929-3.7V3.7M930-3.4V3.4M931-2.1V2.1M932-1.2V1.2M933-1.2V1.2M934-2.1V2.1M935-9V9M936-2.4V2.4M937-8.9V8.9M938-3.3V3.3M939-4.3V4.3M940-2.8V2.8M941-3.2V3.2M942-4.8V4.8M943-2.9V2.9M944-3.5V3.5M945-3.8V3.8M946-3V3M947-10V10M948-4.3V4.3M949-4.3V4.3M950-4.2V4.2M951-4.3V4.3M952-4.2V4.2M953-2.9V2.9M954-4.1V4.1M955-3.9V3.9M956-3.1V3.1M957-3.3V3.3M958-2.9V2.9M959-3.8V3.8M960-2.6V2.6M961-2.3V2.3M962-1.2V1.2M963-2.7V2.7M964-3V3M965-3V3M966-20V20M967-2.9V2.9M968-3.1V3.1M969-3.3V3.3M970-4V4M971-2.9V2.9M972-3.8V3.8M973-2.5V2.5M974-2.8V2.8M975-4.2V4.2M976-3V3M977-3.5V3.5M978-4.2V4.2M979-3.7V3.7M980-3.4V3.4M981-10V10M982-4.2V4.2M983-7.1V7.1M984-2.7V2.7M985-2.5V2.5M986-2.7V2.7M987-2.4V2.4M988-3.2V3.2M989-3.2V3.2M990-2.1V2.1M991-1.8V1.8M992-1.2V1.2M993-1.2V1.2M994-3.3V3.3M995-3.3V3.3M996-4V4M997-4.9V4.9M998-5V5M999-3.4V3.4M1000-4.7V4.7M1001-12V12M1002-5V5M1003-9.2V9.2M1004-3V3M1005-3.3V3.3M1006-2.7V2.7M1007-3.4V3.4M1008-9V9M1009-4.4V4.4M1010-4.7V4.7M1011-4.9V4.9M1012-3.7V3.7M1013-3.6V3.6M1014-4.6V4.6M1015-5.9V5.9M1016-5.5V5.5M1017-5.9V5.9M1018-5.5V5.5M1019-6V6M1020-6.6V6.6M1021-9V9M1022-6.2V6.2M1023-7.4V7.4M1024-5.8V5.8M1025-6V6M1026-3.9V3.9M1027-3.7V3.7M1028-6V6M1029-4.1V4.1M1030-4.2V4.2M1031-3.6V3.6M1032-4.6V4.6M1033-3.1V3.1M1034-4.5V4.5M1035-3.2V3.2M1036-3.6V3.6M1037-4.3V4.3M1038-17V17M1039-3.9V3.9M1040-4.5V4.5M1041-5.2V5.2M1042-5V5M1043-3.9V3.9M1044-3.4V3.4M1045-5.5V5.5M1046-4.8V4.8M1047-3.4V3.4M1048-4.4V4.4M1049-8V8M1050-3.4V3.4M1051-7.7V7.7M1052-2.7V2.7M1053-1.2V1.2M1054-1.2V1.2M1055-3.1V3.1M1056-4.7V4.7M1057-4.7V4.7M1058-11V11M1059-4.5V4.5M1060-3.8V3.8M1061-5.4V5.4M1062-5.8V5.8M1063-3.7V3.7M1064-4.6V4.6M1065-3.7V3.7M1066-3.5V3.5M1067-3.8V3.8M1068-20V20M1069-3.3V3.3M1070-4.1V4.1M1071-3.8V3.8M1072-3.4V3.4M1073-5V5M1074-4V4M1075-5.5V5.5M1076-5.8V5.8M1077-4.2V4.2M1078-5.6V5.6M1079-4.5V4.5M1080-6.1V6.1M1081-4.8V4.8M1082-6V6M1083-5.8V5.8M1084-5.6V5.6M1085-4.5V4.5M1086-9V9M1087-4.8V4.8M1088-5.9V5.9M1089-4.9V4.9M1090-4.7V4.7M1091-5.2V5.2M1092-4.1V4.1M1093-4.9V4.9M1094-3.9V3.9M1095-4.2V4.2M1096-1.2V1.2M1097-1.2V1.2M1098-3.1V3.1M1099-3.3V3.3M1100-4.9V4.9M1101-4.2V4.2M1102-4.1V4.1M1103-4.9V4.9M1104-12V12M1105-5.8V5.8M1106-5.4V5.4M1107-5.1V5.1M1108-4.2V4.2M1109-5.5V5.5M1110-12V12M1111-5.3V5.3M1112-8.9V8.9M1113-3.4V3.4M1114-4.7V4.7M1115-4.7V4.7M1116-3.6V3.6M1117-2.5V2.5M1118-3.1V3.1M1119-2.9V2.9M1120-10V10M1121-4.9V4.9M1122-4.9V4.9M1123-4.6V4.6M1124-4.9V4.9M1125-4.7V4.7M1126-4.2V4.2M1127-3.4V3.4M1128-3.7V3.7M1129-4V4M1130-3.9V3.9M1131-3V3M1132-2.4V2.4M1133-3.4V3.4M1134-3.4V3.4M1135-5.4V5.4M1136-4V4M1137-4.6V4.6M1138-8V8M1139-4.5V4.5M1140-5.2V5.2M1141-5.5V5.5M1142-4V4M1143-6.6V6.6M1144-5.4V5.4M1145-4.2V4.2M1146-6.5V6.5M1147-4.1V4.1M1148-5.5V5.5M1149-4.6V4.6M1150-3.8V3.8M1151-3.8V3.8M1152-3.6V3.6M1153-1.2V1.2M1154-1.2V1.2M1155-13V13M1156-2.6V2.6M1157-3.2V3.2M1158-2.6V2.6M1159-2.5V2.5M1160-4V4M1161-2.6V2.6M1162-3.7V3.7M1163-3.5V3.5M1164-4.2V4.2M1165-2.7V2.7M1166-3.8V3.8M1167-2.4V2.4M1168-2.2V2.2M1169-8V8M1170-1.2V1.2M1171-1.2V1.2M1172-2.8V2.8M1173-2.4V2.4M1174-3.8V3.8M1175-3.3V3.3M1176-9V9M1177-2.7V2.7M1178-2.9V2.9M1179-3.9V3.9M1180-3.1V3.1M1181-3.3V3.3M1182-13V13M1183-2.7V2.7M1184-1.9V1.9M1185-1.2V1.2M1186-2.6V2.6M1187-3.2V3.2M1188-3.4V3.4M1189-3.1V3.1M1190-2.8V2.8M1191-2.7V2.7M1192-3V3M1193-3V3M1194-4.4V4.4M1195-3.5V3.5M1196-2.9V2.9M1197-3.9V3.9M1198-12V12M1199-2.7V2.7M1200-4.4V4.4M1201-4.2V4.2M1202-2.9V2.9M1203-3.7V3.7M1204-2.9V2.9M1205-3V3M1206-2.7V2.7M1207-1.2V1.2M1208-1.2V1.2M1209-2.3V2.3M1210-3.6V3.6M1211-3.1V3.1M1212-17V17M1213-4V4M1214-4V4M1215-4.8V4.8M1216-3.6V3.6M1217-4.2V4.2M1218-3.1V3.1M1219-3.2V3.2M1220-3.6V3.6M1221-7V7M1222-4V4M1223-7.2V7.2M1224-5.1V5.1M1225-4V4M1226-3.8V3.8M1227-4.9V4.9M1228-4.6V4.6M1229-4.5V4.5M1230-4.7V4.7M1231-4.3V4.3M1232-3.3V3.3M1233-4.4V4.4M1234-2.5V2.5M1235-8V8M1236-2.9V2.9M1237-2.6V2.6M1238-3.6V3.6M1239-3.7V3.7M1240-5V5M1241-5.2V5.2M1242-5.3V5.3M1243-4.1V4.1M1244-4.8V4.8M1245-3.9V3.9M1246-5.8V5.8M1247-3.9V3.9M1248-5V5M1249-4.3V4.3M1250-6.3V6.3M1251-6.5V6.5M1252-4.7V4.7M1253-6.2V6.2M1254-4.2V4.2M1255-5.6V5.6M1256-11V11M1257-4.7V4.7M1258-4.9V4.9M1259-4.1V4.1M1260-3.5V3.5M1261-4.1V4.1M1262-4.2V4.2M1263-3.2V3.2M1264-7V7M1265-2.7V2.7M1266-8.5V8.5M1267-2.9V2.9M1268-2.6V2.6M1269-3.1V3.1M1270-4.1V4.1M1271-2.9V2.9M1272-4V4M1273-3.3V3.3M1274-8V8M1275-3.5V3.5M1276-3.3V3.3M1277-3.2V3.2M1278-2.5V2.5M1279-9V9M1280-3.1V3.1M1281-1.2V1.2M1282-1.9V1.9M1283-3V3M1284-2.8V2.8M1285-2.9V2.9M1286-4.4V4.4M1287-3.2V3.2M1288-4.3V4.3M1289-3.7V3.7M1290-2.5V2.5M1291-2.7V2.7M1292-2.2V2.2M1293-2.5V2.5M1294-1.2V1.2M1295-2V2M1296-2.2V2.2M1297-2.4V2.4M1298-3.1V3.1M1299-3V3M1300-12V12M1301-4.4V4.4M1302-4.8V4.8M1303-4V4M1304-4.4V4.4M1305-4.1V4.1M1306-3.2V3.2M1307-3.7V3.7M1308-2.8V2.8M1309-2.9V2.9M1310-3V3M1311-1.2V1.2M1312-2V2M1313-3.3V3.3M1314-8.5V8.5M1315-2.7V2.7M1316-3V3M1317-3V3M1318-4.1V4.1M1319-3.2V3.2M1320-3.9V3.9M1321-2.9V2.9M1322-3.3V3.3M1323-2.8V2.8M1324-3.1V3.1M1325-3.7V3.7M1326-3V3M1327-2.8V2.8M1328-3.9V3.9M1329-2.9V2.9M1330-12.4V12.4M1331-4.2V4.2M1332-4.6V4.6M1333-4.9V4.9M1334-3.4V3.4M1335-4.9V4.9M1336-4.1V4.1M1337-4.4V4.4M1338-4V4M1339-4.8V4.8M1340-3.5V3.5M1341-2.9V2.9M1342-4.5V4.5M1343-4.1V4.1M1344-4.1V4.1M1345-5.8V5.8M1346-2.9V2.9M1347-3.5V3.5M1348-3.5V3.5M1349-3.1V3.1M1350-2.8V2.8M1351-1V1M1352-2.1V2.1M1353-2.9V2.9M1354-2.9V2.9M1355-3.8V3.8M1356-3.5V3.5M1357-3.9V3.9M1358-3.8V3.8M1359-4.1V4.1M1360-3.9V3.9M1361-2.4V2.4M1362-3.3V3.3M1363-2.6V2.6M1364-4.6V4.6M1365-2.1V2.1M1366-1.9V1.9M1367-2.1V2.1M1368-1.5V1.5M1369-1.7V1.7M1370-2.3V2.3M1371-7V7M1372-1.6V1.6M1373-1.6V1.6M1374-2.2V2.2M1375-2V2M1376-2.1V2.1M1377-1.4V1.4M1378-1.4V1.4M1379-1.4V1.4M1381-1.3V1.3M1382-1.1V1.1M1383-1.9V1.9M1384-1.6V1.6M1385-1.6V1.6M1386-4.1V4.1M1387-2V2M1388-1.9V1.9M1389-1.4V1.4M1390-1.6V1.6M1391-1.3V1.3M1392-1.5V1.5M1393-1.4V1.4M1394-1.2V1.2M1395-1.1V1.1M1396-0.8V0.8M1397-0.7V0.7M1399-0.8V0.8M1401-0.7V0.7M1403-1.9V1.9M1404-0.7V0.7M1405-0.7V0.7M1415-0.8V0.8M1416-1.6V1.6M1418-1.5V1.5M1420-0.7V0.7M1421-0.7V0.7M1423-1.2V1.2" stroke="#26ab76" stroke-width="1.050"/></g></svg>
<svg style="left:0;top:0" width="1902" height="944"><g transform="translate(439.5,557.2)"><path d="M-0.500 0H1463" stroke="#26ab76" stroke-width="1.300"/><path d="M0-9.4V9.4M1-8.7V8.7M2-8.2V8.2M3-10.2V10.2M4-9.4V9.4M5-12.5V12.5M6-10.5V10.5M7-10.4V10.4M8-7.6V7.6M9-9.2V9.2M10-9.3V9.3M11-7.4V7.4M12-8.7V8.7M13-8.1V8.1M14-11.9V11.9M15-13V13M16-13.4V13.4M17-7V7M18-7.8V7.8M19-9.3V9.3M20-7.6V7.6M21-6.9V6.9M22-6.5V6.5M23-7.7V7.7M24-8V8M25-7.2V7.2M26-11.2V11.2M27-13.3V13.3M28-10.8V10.8M29-9.9V9.9M30-9.9V9.9M31-13.4V13.4M32-8V8M33-9.9V9.9M34-10.4V10.4M35-9.8V9.8M36-8.7V8.7M37-7.5V7.5M38-7.7V7.7M39-8.8V8.8M40-9V9M41-6.9V6.9M42-9.7V9.7M43-8.9V8.9M44-8.8V8.8M45-9.5V9.5M46-8.3V8.3M47-7.8V7.8M48-6.9V6.9M49-11.8V11.8M50-8.1V8.1M51-15.7V15.7M52-11.5V11.5M53-9.7V9.7M54-10.9V10.9M55-11.2V11.2M56-9.2V9.2M57-9.7V9.7M58-9.6V9.6M59-9.1V9.1M60-11.9V11.9M61-8V8M62-7.8V7.8M63-8.1V8.1M64-11.6V11.6M65-9V9M66-9.4V9.4M67-7.6V7.6M68-8.2V8.2M69-8V8M70-7V7M71-14.4V14.4M72-7.3V7.3M73-8.2V8.2M74-8.1V8.1M75-8.2V8.2M76-11.1V11.1M77-11.4V11.4M78-9V9M79-10.2V10.2M80-8.8V8.8M81-11.9V11.9M82-10.3V10.3M83-10V10M84-9.8V9.8M85-7.7V7.7M86-10.4V10.4M87-9.2V9.2M88-16.5V16.5M89-12.6V12.6M90-7.2V7.2M91-7.7V7.7M92-13.8V13.8M93-7.6V7.6M94-8.8V8.8M95-6.8V6.8M96-8.5V8.5M97-7.9V7.9M98-7.1V7.1M99-8.4V8.4M100-6.1V6.1M101-16.7V16.7M102-9.7V9.7M103-9.2V9.2M104-9V9M105-11.1V11.1M106-9.4V9.4M107-9.7V9.7M108-8.9V8.9M109-13.5V13.5M110-7.5V7.5M111-9.5V9.5M112-9.3V9.3M113-10V10M114-7.6V7.6M115-7.9V7.9M116-7.8V7.8M117-8.3V8.3M118-6.6V6.6M119-8.7V8.7M120-8.4V8.4M121-6.4V6.4M122-8.1V8.1M123-12.1V12.1M124-7.1V7.1M125-6.4V6.4M126-11.9V11.9M127-9.8V9.8M128-14.9V14.9M129-12.3V12.3M130-10V10M131-7.8V7.8M132-8.8V8.8M133-9.4V9.4M134-14.2V14.2M135-11.6V11.6M136-12.8V12.8M137-7.3V7.3M138-9.2V9.2M139-6.9V6.9M140-9.1V9.1M141-7.4V7.4M142-7.4V7.4M143-13.4V13.4M144-14.1V14.1M145-13.3V13.3M146-16.3V16.3M147-7.7V7.7M148-6V6M149-6.8V6.8M150-6.2V6.2M151-7.2V7.2M152-12.4V12.4M153-9.6V9.6M154-10.6V10.6M155-8.1V8.1M156-7.6V7.6M157-9.9V9.9M158-7.2V7.2M159-9.3V9.3M160-13.5V13.5M161-7.2V7.2M162-8.3V8.3M163-9.5V9.5M164-6.9V6.9M165-12V12M166-8.3V8.3M167-13.3V13.3M168-6.6V6.6M169-17.1V17.1M170-6.1V6.1M171-12.5V12.5M172-5.9V5.9M173-6.4V6.4M174-6.2V6.2M175-7.5V7.5M176-5.6V5.6M177-5.6V5.6M178-9.2V9.2M179-13V13M180-8.9V8.9M181-13.3V13.3M182-7.6V7.6M183-13.3V13.3M184-9.1V9.1M185-9.3V9.3M186-12.8V12.8M187-8.1V8.1M188-9V9M189-7.9V7.9M190-8.6V8.6M191-8.6V8.6M192-14.4V14.4M193-7.7V7.7M194-7.4V7.4M195-6.4V6.4M196-7.7V7.7M197-8V8M198-15V15M199-7.9V7.9M200-5.6V5.6M201-16.8V16.8M202-5.5V5.5M203-8.5V8.5M204-16.6V16.6M205-8.7V8.7M206-12.3V12.3M207-12.8V12.8M208-16.9V16.9M209-8.8V8.8M210-7.1V7.1M211-15.3V15.3M212-6.7V6.7M213-8.3V8.3M214-6.4V6.4M215-12V12M216-6.8V6.8M217-6.2V6.2M218-7.3V7.3M219-6.7V6.7M220-6V6M221-7.8V7.8M222-6.3V6.3M223-7.3V7.3M224-6.5V6.5M225-7.4V7.4M226-6.1V6.1M227-5.5V5.5M228-8.4V8.4M229-9.4V9.4M230-8.1V8.1M231-9.6V9.6M232-8V8M233-7.4V7.4M234-12.3V12.3M235-8.4V8.4M236-8.3V8.3M237-6.6V6.6M238-8V8M239-8.1V8.1M240-6.7V6.7M241-6.3V6.3M242-7.4V7.4M243-7.8V7.8M244-6V6M245-8V8M246-6.6V6.6M247-6.4V6.4M248-7.1V7.1M249-5.7V5.7M250-7.5V7.5M251-7.6V7.6M252-5.3V5.3M253-6V6M254-7.5V7.5M255-7.5V7.5M256-9.6V9.6M257-9.2V9.2M258-7.6V7.6M259-6.8V6.8M260-8.7V8.7M261-8.1V8.1M262-11.5V11.5M263-8.8V8.8M264-8.9V8.9M265-12.8V12.8M266-8V8M267-15.9V15.9M268-7.3V7.3M269-7.4V7.4M270-6.9V6.9M271-7.6V7.6M272-7.3V7.3M273-12.1V12.1M274-7.6V7.6M275-5.9V5.9M276-7.7V7.7M277-7.3V7.3M278-5.6V5.6M279-8.7V8.7M280-8.2V8.2M281-9.5V9.5M282-10.3V10.3M283-8.3V8.3M284-8V8M285-8.4V8.4M286-9.5V9.5M287-7.3V7.3M288-8.8V8.8M289-17.1V17.1M290-8.5V8.5M291-9V9M292-7.4V7.4M293-8.8V8.8M294-8V8M295-7.7V7.7M296-7.7V7.7M297-6.3V6.3M298-6.4V6.4M299-7.5V7.5M300-8.1V8.1M301-5.9V5.9M302-7.1V7.1M303-7.8V7.8M304-9.8V9.8M305-10.1V10.1M306-13.4V13.4M307-8.9V8.9M308-9V9M309-10V10M310-7.3V7.3M311-9.2V9.2M312-9.3V9.3M313-9.5V9.5M314-8.4V8.4M315-9.2V9.2M316-12.5V12.5M317-6.7V6.7M318-6.5V6.5M319-6.8V6.8M320-8.3V8.3M321-6.7V6.7M322-12.1V12.1M323-13.8V13.8M324-6.6V6.6M325-6.5V6.5M326-7.7V7.7M327-7.2V7.2M328-7.5V7.5M329-8.9V8.9M330-14V14M331-9.8V9.8M332-7.5V7.5M333-9.4V9.4M334-8.9V8.9M335-8.9V8.9M336-8.6V8.6M337-10.3V10.3M338-8.8V8.8M339-7.6V7.6M340-9.9V9.9M341-6.9V6.9M342-7.6V7.6M343-9.1V9.1M344-8.6V8.6M345-7.1V7.1M346-8.6V8.6M347-13.4V13.4M348-13.9V13.9M349-11.6V11.6M350-7.5V7.5M351-7.8V7.8M352-6.2V6.2M353-7.9V7.9M354-6.6V6.6M355-8V8M356-12.8V12.8M357-8.1V8.1M358-8V8M359-10V10M360-7.9V7.9M361-9.4V9.4M362-10.1V10.1M363-13.9V13.9M364-8.4V8.4M365-9.8V9.8M366-8.2V8.2M367-8.5V8.5M368-8V8M369-9.1V9.1M370-9V9M371-7.9V7.9M372-6.5V6.5M373-9V9M374-7V7M375-8.3V8.3M376-8.7V8.7M377-7.2V7.2M378-6.4V6.4M379-7.1V7.1M380-8.6V8.6M381-8.6V8.6M382-11.2V11.2M383-10.8V10.8M384-8.4V8.4M385-9.4V9.4M386-9.2V9.2M387-12.2V12.2M388-10.7V10.7M389-7.8V7.8M390-7.4V7.4M391-10.2V10.2M392-9V9M393-10.2V10.2M394-7V7M395-7.9V7.9M396-8.9V8.9M397-8V8M398-9.5V9.5M399-6.8V6.8M400-8.6V8.6M401-7.9V7.9M402-6.7V6.7M403-7.2V7.2M404-6.8V6.8M405-14V14M406-9.3V9.3M407-10.5V10.5M408-10.7V10.7M409-11.1V11.1M410-16.4V16.4M411-12.9V12.9M412-10.7V10.7M413-12.8V12.8M414-8.4V8.4M415-10.3V10.3M416-13.3V13.3M417-8.5V8.5M418-14.3V14.3M419-14.4V14.4M420-7.8V7.8M421-11.8V11.8M422-12.7V12.7M423-6.8V6.8M424-7.1V7.1M425-7.6V7.6M426-7.1V7.1M427-16V16M428-6.9V6.9M429-8.8V8.8M430-6.8V6.8M431-10.4V10.4M432-15.2V15.2M433-10.4V10.4M434-10.9V10.9M435-10.5V10.5M436-8.7V8.7M437-9.1V9.1M438-8.5V8.5M439-13.9V13.9M440-8.2V8.2M441-11.6V11.6M442-9.6V9.6M443-8.5V8.5M444-9.2V9.2M445-8.8V8.8M446-7.7V7.7M447-7.9V7.9M448-8.4V8.4M449-13.5V13.5M450-8.6V8.6M451-8.4V8.4M452-6.7V6.7M453-6.7V6.7M454-12.4V12.4M455-12.9V12.9M456-13.9V13.9M457-12.4V12.4M458-9.1V9.1M459-8.1V8.1M460-11.7V11.7M461-7.8V7.8M462-9.9V9.9M463-8.2V8.2M464-9.7V9.7M465-10.1V10.1M466-8.1V8.1M467-9.4V9.4M468-8.5V8.5M469-9.3V9.3M470-7.2V7.2M471-6.8V6.8M472-14.1V14.1M473-8.2V8.2M474-6.6V6.6M475-8V8M476-7.9V7.9M477-6.5V6.5M478-7.8V7.8M479-6.7V6.7M480-15.3V15.3M481-10V10M482-12.4V12.4M483-9.4V9.4M484-9.1V9.1M485-9.2V9.2M486-9.8V9.8M487-12.7V12.7M488-8.8V8.8M489-17.2V17.2M490-9.9V9.9M491-10.2V10.2M492-8.9V8.9M493-8.8V8.8M494-7.1V7.1M495-7V7M496-9.4V9.4M497-8.1V8.1M498-8.7V8.7M499-8.3V8.3M500-13.5V13.5M501-7.1V7.1M502-8V8M503-8V8M504-5.9V5.9M505-7.6V7.6M506-6.1V6.1M507-9.1V9.1M508-8.2V8.2M509-7.6V7.6M510-8.3V8.3M511-9.1V9.1M512-9.8V9.8M513-8.8V8.8M514-9.8V9.8M515-13V13M516-7.2V7.2M517-9.3V9.3M518-7.7V7.7M519-7.2V7.2M520-6.9V6.9M521-12.4V12.4M522-8.5V8.5M523-6.7V6.7M524-8.5V8.5M525-7.6V7.6M526-17.3V17.3M527-14V14M528-6.6V6.6M529-7.2V7.2M530-13.8V13.8M531-7.1V7.1M532-14.1V14.1M533-14V14M534-9.9V9.9M535-10V10M536-8.3V8.3M537-8.9V8.9M538-8.2V8.2M539-9.6V9.6M540-9.5V9.5M541-8.6V8.6M542-8.4V8.4M543-7.4V7.4M544-7.7V7.7M545-7.1V7.1M546-14.5V14.5M547-6.6V6.6M548-6.7V6.7M549-7.9V7.9M550-7.3V7.3M551-7.5V7.5M552-5.9V5.9M553-13.2V13.2M554-8.2V8.2M555-6.7V6.7M556-7.4V7.4M557-8.4V8.4M558-10.2V10.2M559-8.4V8.4M560-7.9V7.9M561-7.1V7.1M562-7.1V7.1M563-8.1V8.1M564-9.6V9.6M565-7.4V7.4M566-7.9V7.9M567-9.2V9.2M568-9.3V9.3M569-8.6V8.6M570-7.2V7.2M571-8V8M572-6.7V6.7M573-7.7V7.7M574-7.4V7.4M575-8V8M576-6.8V6.8M577-6.7V6.7M578-6.5V6.5M579-7.8V7.8M580-7.7V7.7M581-13.8V13.8M582-10.2V10.2M583-8V8M584-9.4V9.4M585-8.7V8.7M586-10V10M587-7.5V7.5M588-7.1V7.1M589-9.3V9.3M590-7.5V7.5M591-7.4V7.4M592-7.6V7.6M593-7.3V7.3M594-8.3V8.3M595-7.9V7.9M596-8.7V8.7M597-8.2V8.2M598-8.5V8.5M599-7.9V7.9M600-6.1V6.1M601-5.8V5.8M602-5.7V5.7M603-6.2V6.2M604-6.4V6.4M605-6V6M606-5.4V5.4M607-5.2V5.2M608-7.6V7.6M609-8.8V8.8M610-7.3V7.3M611-8.6V8.6M612-9.8V9.8M613-9.2V9.2M614-8V8M615-8.9V8.9M616-6.8V6.8M617-14.4V14.4M618-8.6V8.6M619-8.5V8.5M620-6.2V6.2M621-7.6V7.6M622-7.9V7.9M623-8.6V8.6M624-7.9V7.9M625-6.5V6.5M626-8.2V8.2M627-7.8V7.8M628-13V13M629-6.7V6.7M630-13.3V13.3M631-13.9V13.9M632-5.9V5.9M633-8.1V8.1M634-9.5V9.5M635-8V8M636-11.7V11.7M637-7.5V7.5M638-6.9V6.9M639-13V13M640-8.9V8.9M641-8V8M642-7.4V7.4M643-14.5V14.5M644-7V7M645-7.2V7.2M646-8.4V8.4M647-7.1V7.1M648-7.4V7.4M649-6.2V6.2M650-8.3V8.3M651-12.1V12.1M652-7.2V7.2M653-6.6V6.6M654-12.4V12.4M655-7.7V7.7M656-6.8V6.8M657-6.2V6.2M658-7.4V7.4M659-16V16M660-8.2V8.2M661-8.4V8.4M662-14.3V14.3M663-7.1V7.1M664-9V9M665-13.7V13.7M666-7.3V7.3M667-8.7V8.7M668-8.8V8.8M669-6.9V6.9M670-6.8V6.8M671-8.4V8.4M672-9.1V9.1M673-8.8V8.8M674-8V8M675-8.1V8.1M676-8.6V8.6M677-7.1V7.1M678-7.8V7.8M679-7.7V7.7M680-6V6M681-8V8M682-7.3V7.3M683-13.2V13.2M684-10.7V10.7M685-7.5V7.5M686-9.3V9.3M687-8.9V8.9M688-7.3V7.3M689-12.8V12.8M690-9.8V9.8M691-7.2V7.2M692-8V8M693-8.7V8.7M694-6.9V6.9M695-7.6V7.6M696-7.9V7.9M697-6.8V6.8M698-9.3V9.3M699-8.6V8.6M700-7.9V7.9M701-13.2V13.2M702-8.3V8.3M703-6V6M704-7.6V7.6M705-13.6V13.6M706-5.9V5.9M707-14.3V14.3M708-5.9V5.9M709-9.1V9.1M710-9V9M711-9.1V9.1M712-8.7V8.7M713-7.9V7.9M714-9.8V9.8M715-7.2V7.2M716-8.4V8.4M717-9V9M718-9.8V9.8M719-9.6V9.6M720-7.6V7.6M721-6.8V6.8M722-9.4V9.4M723-9.3V9.3M724-8.8V8.8M725-8.9V8.9M726-6.4V6.4M727-8V8M728-6.4V6.4M729-8.7V8.7M730-8.7V8.7M731-6.1V6.1M732-14.3V14.3M733-14.4V14.4M734-10.2V10.2M735-9.4V9.4M736-8.9V8.9M737-15.5V15.5M738-9.1V9.1M739-10.1V10.1M740-9.2V9.2M741-12.6V12.6M742-9.7V9.7M743-8.1V8.1M744-13.3V13.3M745-12.1V12.1M746-8.1V8.1M747-9.8V9.8M748-7.5V7.5M749-7.3V7.3M750-11.9V11.9M751-9V9M752-8.4V8.4M753-8.6V8.6M754-14.2V14.2M755-8.5V8.5M756-13.2V13.2M757-6.1V6.1M758-11.9V11.9M759-12V12M760-10.3V10.3M761-8.6V8.6M762-8.6V8.6M763-13.2V13.2M764-9.6V9.6M765-7.8V7.8M766-14.4V14.4M767-10.5V10.5M768-13.9V13.9M769-11.7V11.7M770-8.2V8.2M771-12.9V12.9M772-12.7V12.7M773-7.9V7.9M774-13.8V13.8M775-8.6V8.6M776-8.5V8.5M777-8V8M778-8.1V8.1M779-8.7V8.7M780-7.3V7.3M781-7.5V7.5M782-8.7V8.7M783-8.1V8.1M784-6.6V6.6M785-9.6V9.6M786-8.8V8.8M787-8.6V8.6M788-8.5V8.5M789-11V11M790-7.8V7.8M791-7.9V7.9M792-10.7V10.7M793-10.1V10.1M794-12.2V12.2M795-9.7V9.7M796-13.3V13.3M797-7.6V7.6M798-7.2V7.2M799-7.4V7.4M800-9.9V9.9M801-9.1V9.1M802-7.2V7.2M803-6.7V6.7M804-8.5V8.5M805-8.3V8.3M806-7.8V7.8M807-6.6V6.6M808-14.3V14.3M809-7.2V7.2M810-13.3V13.3M811-9.2V9.2M812-9.9V9.9M813-12.4V12.4M814-11.2V11.2M815-10.9V10.9M816-10V10M817-16.5V16.5M818-16V16M819-8.9V8.9M820-8.2V8.2M821-9.6V9.6M822-7.4V7.4M823-7.9V7.9M824-9.3V9.3M825-9.5V9.5M826-9.9V9.9M827-7.3V7.3M828-6.9V6.9M829-9V9M830-9.1V9.1M831-8.3V8.3M832-7.8V7.8M833-6.9V6.9M834-6.6V6.6M835-8.6V8.6M836-9.6V9.6M837-11.2V11.2M838-14.1V14.1M839-16.9V16.9M840-10.1V10.1M841-14.3V14.3M842-11.7V11.7M843-10.6V10.6M844-10.1V10.1M845-9.3V9.3M846-9.6V9.6M847-8.7V8.7M848-8.2V8.2M849-7.1V7.1M850-7.8V7.8M851-11.6V11.6M852-8.1V8.1M853-13.5V13.5M854-7.4V7.4M855-8.4V8.4M856-6.3V6.3M857-7.3V7.3M858-16.3V16.3M859-6.8V6.8M860-6V6M861-11.5V11.5M862-9.3V9.3M863-12.7V12.7M864-7.7V7.7M865-9.9V9.9M866-7.5V7.5M867-7.8V7.8M868-14.4V14.4M869-9V9M870-8.8V8.8M871-10V10M872-7.7V7.7M873-14.4V14.4M874-9.4V9.4M875-6.7V6.7M876-8.2V8.2M877-8.4V8.4M878-9.1V9.1M879-8.9V8.9M880-6.9V6.9M881-6.8V6.8M882-7.5V7.5M883-7.7V7.7M884-7.1V7.1M885-7.1V7.1M886-9.3V9.3M887-9.6V9.6M888-8V8M889-10V10M890-10.3V10.3M891-9.1V9.1M892-14.4V14.4M893-8V8M894-7.2V7.2M895-9.7V9.7M896-14.4V14.4M897-7.3V7.3M898-6.9V6.9M899-7.6V7.6M900-9.3V9.3M901-6.9V6.9M902-7.8V7.8M903-8.4V8.4M904-8.9V8.9M905-7.1V7.1M906-11.6V11.6M907-13.6V13.6M908-7.8V7.8M909-5.7V5.7M910-7.4V7.4M911-9V9M912-13.2V13.2M913-9.5V9.5M914-10.6V10.6M915-8.4V8.4M916-8.3V8.3M917-9V9M918-10V10M919-8.9V8.9M920-7.2V7.2M921-7.7V7.7M922-7.3V7.3M923-8.2V8.2M924-8V8M925-6.9V6.9M926-7.7V7.7M927-11.7V11.7M928-8V8M929-8.1V8.1M930-7.1V7.1M931-6.7V6.7M932-6.1V6.1M933-6.7V6.7M934-6V6M935-7.3V7.3M936-12V12M937-7.9V7.9M938-10.5V10.5M939-11.7V11.7M940-9.3V9.3M941-9.8V9.8M942-8.1V8.1M943-8V8M944-13.3V13.3M945-11.7V11.7M946-14V14M947-7.3V7.3M948-8.8V8.8M949-8.8V8.8M950-8V8M951-12.6V12.6M952-8.1V8.1M953-6.6V6.6M954-15.7V15.7M955-6.3V6.3M956-6.7V6.7M957-14.5V14.5M958-6.9V6.9M959-5.5V5.5M960-6.9V6.9M961-13V13M962-9.5V9.5M963-8.3V8.3M964-9.6V9.6M965-9.6V9.6M966-9.2V9.2M967-8.8V8.8M968-9.6V9.6M969-7.6V7.6M970-11.9V11.9M971-14.7V14.7M972-7V7M973-6.4V6.4M974-7V7M975-8.6V8.6M976-12V12M977-7.2V7.2M978-7.4V7.4M979-7.6V7.6M980-7V7M981-7.4V7.4M982-6.3V6.3M983-7.1V7.1M984-5.9V5.9M985-5.9V5.9M986-5.7V5.7M987-7.7V7.7M988-7.9V7.9M989-10V10M990-12.6V12.6M991-9V9M992-8.5V8.5M993-8.9V8.9M994-9.3V9.3M995-8.9V8.9M996-8.8V8.8M997-6.5V6.5M998-6.8V6.8M999-7.7V7.7M1000-7.6V7.6M1001-14.9V14.9M1002-8.3V8.3M1003-6.8V6.8M1004-6.1V6.1M1005-14.9V14.9M1006-8.2V8.2M1007-6.7V6.7M1008-7.1V7.1M1009-12.3V12.3M1010-5.5V5.5M1011-5.3V5.3M1012-7V7M1013-14.6V14.6M1014-9.6V9.6M1015-8.7V8.7M1016-14.5V14.5M1017-7.9V7.9M1018-8.4V8.4M1019-11.8V11.8M1020-8.1V8.1M1021-9.5V9.5M1022-7.7V7.7M1023-9.3V9.3M1024-7.5V7.5M1025-8V8M1026-8.7V8.7M1027-8.8V8.8M1028-7.7V7.7M1029-13V13M1030-6.6V6.6M1031-14.2V14.2M1032-6.1V6.1M1033-6.7V6.7M1034-6.8V6.8M1035-5.5V5.5M1036-5.7V5.7M1037-6.8V6.8M1038-9.4V9.4M1039-8.3V8.3M1040-8V8M1041-7.3V7.3M1042-9.9V9.9M1043-9.5V9.5M1044-9.6V9.6M1045-9.8V9.8M1046-8.3V8.3M1047-7.5V7.5M1048-8.8V8.8M1049-8.3V8.3M1050-8.5V8.5M1051-8.5V8.5M1052-8.3V8.3M1053-6.7V6.7M1054-8.6V8.6M1055-6.4V6.4M1056-7.5V7.5M1057-7.2V7.2M1058-13.2V13.2M1059-7.1V7.1M1060-7.7V7.7M1061-6.3V6.3M1062-7.4V7.4M1063-8.8V8.8M1064-10.2V10.2M1065-10.1V10.1M1066-9.3V9.3M1067-8V8M1068-8.6V8.6M1069-7.2V7.2M1070-8.7V8.7M1071-7.9V7.9M1072-14.1V14.1M1073-16.5V16.5M1074-6.8V6.8M1075-13.3V13.3M1076-8.5V8.5M1077-13.5V13.5M1078-7.4V7.4M1079-7V7M1080-6.2V6.2M1081-8.1V8.1M1082-8V8M1083-6.1V6.1M1084-11.7V11.7M1085-6.3V6.3M1086-15.1V15.1M1087-6V6M1088-14.1V14.1M1089-7.6V7.6M1090-14V14M1091-8.4V8.4M1092-7.4V7.4M1093-10.5V10.5M1094-7.3V7.3M1095-8.7V8.7M1096-7.6V7.6M1097-8V8M1098-12.2V12.2M1099-9.8V9.8M1100-9.3V9.3M1101-7.7V7.7M1102-7.3V7.3M1103-6.7V6.7M1104-7.9V7.9M1105-7V7M1106-8.4V8.4M1107-8.8V8.8M1108-8.2V8.2M1109-7.7V7.7M1110-8.3V8.3M1111-6.5V6.5M1112-7.4V7.4M1113-8V8M1114-8.7V8.7M1115-9.5V9.5M1116-9.6V9.6M1117-10.8V10.8M1118-9.3V9.3M1119-9.1V9.1M1120-7.6V7.6M1121-12.2V12.2M1122-11.6V11.6M1123-8.7V8.7M1124-8.7V8.7M1125-9.2V9.2M1126-9V9M1127-7.1V7.1M1128-9.6V9.6M1129-15.1V15.1M1130-8.5V8.5M1131-6.9V6.9M1132-6.5V6.5M1133-8.5V8.5M1134-12.3V12.3M1135-7.3V7.3M1136-7.6V7.6M1137-6.9V6.9M1138-7.7V7.7M1139-9.2V9.2M1140-8.3V8.3M1141-8.8V8.8M1142-10.3V10.3M1143-10.2V10.2M1144-8V8M1145-9.8V9.8M1146-10.3V10.3M1147-9.1V9.1M1148-10.2V10.2M1149-11.6V11.6M1150-8.6V8.6M1151-10.2V10.2M1152-8V8M1153-6.9V6.9M1154-8.8V8.8M1155-14.2V14.2M1156-6.8V6.8M1157-7.8V7.8M1158-8.4V8.4M1159-8.1V8.1M1160-6.8V6.8M1161-11.7V11.7M1162-7.4V7.4M1163-6.8V6.8M1164-11.4V11.4M1165-8.1V8.1M1166-13.1V13.1M1167-13.2V13.2M1168-13.2V13.2M1169-9.1V9.1M1170-8.6V8.6M1171-8.7V8.7M1172-9.3V9.3M1173-8.7V8.7M1174-9.9V9.9M1175-9.2V9.2M1176-8.8V8.8M1177-9.5V9.5M1178-7.1V7.1M1179-9.2V9.2M1180-7.4V7.4M1181-9.8V9.8M1182-12.6V12.6M1183-12.3V12.3M1184-8.5V8.5M1185-9V9M1186-8.8V8.8M1187-6.8V6.8M1188-8.6V8.6M1189-8.8V8.8M1190-11.6V11.6M1191-11.5V11.5M1192-10.6V10.6M1193-8.6V8.6M1194-10.7V10.7M1195-8.1V8.1M1196-11V11M1197-11.5V11.5M1198-8.1V8.1M1199-13.6V13.6M1200-14.1V14.1M1201-11.7V11.7M1202-7.7V7.7M1203-7.6V7.6M1204-11.6V11.6M1205-6.9V6.9M1206-12.2V12.2M1207-9.7V9.7M1208-7.3V7.3M1209-15.2V15.2M1210-11.9V11.9M1211-6.7V6.7M1212-12.6V12.6M1213-8.6V8.6M1214-6.4V6.4M1215-10.3V10.3M1216-14.4V14.4M1217-14.4V14.4M1218-11.2V11.2M1219-16V16M1220-11.6V11.6M1221-13.2V13.2M1222-15.3V15.3M1223-10.1V10.1M1224-9.1V9.1M1225-9.5V9.5M1226-12.4V12.4M1227-15.4V15.4M1228-13.9V13.9M1229-7.5V7.5M1230-8.4V8.4M1231-9.7V9.7M1232-8.6V8.6M1233-13.5V13.5M1234-7.4V7.4M1235-6.8V6.8M1236-7.5V7.5M1237-7.6V7.6M1238-8.6V8.6M1239-7.5V7.5M1240-9.6V9.6M1241-9.9V9.9M1242-8.5V8.5M1243-8V8M1244-13.9V13.9M1245-9.5V9.5M1246-11.8V11.8M1247-8.2V8.2M1248-8.1V8.1M1249-8.6V8.6M1250-17.4V17.4M1251-7.2V7.2M1252-9.6V9.6M1253-8.6V8.6M1254-7.8V7.8M1255-8.4V8.4M1256-8.8V8.8M1257-8.3V8.3M1258-7.8V7.8M1259-8.4V8.4M1260-7.7V7.7M1261-8.6V8.6M1262-6.6V6.6M1263-7.4V7.4M1264-14.3V14.3M1265-8.3V8.3M1266-9.4V9.4M1267-10.1V10.1M1268-9.9V9.9M1269-10.4V10.4M1270-10.2V10.2M1271-7.7V7.7M1272-8.6V8.6M1273-8.1V8.1M1274-8.9V8.9M1275-7V7M1276-15.1V15.1M1277-9V9M1278-9.7V9.7M1279-7.6V7.6M1280-6.6V6.6M1281-17V17M1282-8.5V8.5M1283-6.5V6.5M1284-8.3V8.3M1285-11.8V11.8M1286-6.4V6.4M1287-6.5V6.5M1288-7.7V7.7M1289-6.8V6.8M1290-13.5V13.5M1291-14.6V14.6M1292-14.1V14.1M1293-13.6V13.6M1294-10.4V10.4M1295-8.2V8.2M1296-9.1V9.1M1297-7V7M1298-9V9M1299-8.6V8.6M1300-9.4V9.4M1301-11.5V11.5M1302-12.3V12.3M1303-12.6V12.6M1304-6.9V6.9M1305-8V8M1306-11.7V11.7M1307-7.7V7.7M1308-7.6V7.6M1309-7.1V7.1M1310-5.4V5.4M1311-7.2V7.2M1312-6.8V6.8M1313-10.2V10.2M1314-5.2V5.2M1315-6.7V6.7M1316-9.2V9.2M1317-6.8V6.8M1318-13.7V13.7M1319-6.6V6.6M1320-8.6V8.6M1321-7.8V7.8M1322-11.9V11.9M1323-7.1V7.1M1324-6.2V6.2M1325-10.5V10.5M1326-6.7V6.7M1327-5.8V5.8M1328-5.2V5.2M1329-6.3V6.3M1330-6.3V6.3M1331-6.2V6.2M1332-5.5V5.5M1333-6.6V6.6M1334-4.5V4.5M1335-5.2V5.2M1336-5.6V5.6M1337-5V5M1338-9.2V9.2M1339-4.9V4.9M1340-4V4M1341-10V10M1342-7.4V7.4M1343-7.1V7.1M1344-7.1V7.1M1345-5.6V5.6M1346-6.1V6.1M1347-5.9V5.9M1348-5.1V5.1M1349-5.9V5.9M1350-5.9V5.9M1351-5.6V5.6M1352-5.9V5.9M1353-5.5V5.5M1354-3.9V3.9M1355-5.3V5.3M1356-3.8V3.8M1357-5V5M1358-4.2V4.2M1359-4.3V4.3M1360-4V4M1361-7V7M1362-4.1V4.1M1363-4.2V4.2M1364-3.2V3.2M1365-4.1V4.1M1366-7.4V7.4M1367-8.1V8.1M1368-6.2V6.2M1369-3.7V3.7M1370-4.2V4.2M1371-3.6V3.6M1372-3.8V3.8M1373-4.1V4.1M1374-4.1V4.1M1375-3.9V3.9M1376-5.9V5.9M1377-6.2V6.2M1378-2.9V2.9M1379-2.8V2.8M1380-3.6V3.6M1381-3.5V3.5M1382-3.3V3.3M1383-2.7V2.7M1384-3.2V3.2M1385-2.4V2.4M1386-2.4V2.4M1387-3V3M1388-2.2V2.2M1389-2.7V2.7M1390-2.7V2.7M1391-2.5V2.5M1392-3.2V3.2M1393-2.6V2.6M1394-4.6V4.6M1395-3.2V3.2M1396-3V3M1397-2.4V2.4M1398-2.1V2.1M1399-2.3V2.3M1400-2.6V2.6M1401-2.3V2.3M1402-2.2V2.2M1403-1.7V1.7M1404-2V2M1405-1.6V1.6M1406-1.7V1.7M1407-1.9V1.9M1408-1.6V1.6M1409-1.3V1.3M1410-1.3V1.3M1411-1.2V1.2M1412-1.1V1.1M1413-1.4V1.4M1414-1.1V1.1M1415-1.1V1.1M1416-1V1M1417-1.5V1.5M1418-1.6V1.6M1419-1.1V1.1M1420-1.5V1.5M1421-1.5V1.5M1422-1.9V1.9M1423-1V1M1424-1.8V1.8M1425-0.9V0.9M1426-1V1M1427-1V1M1428-1.5V1.5M1429-0.8V0.8M1430-0.8V0.8M1434-1.1V1.1M1435-1.2V1.2M1437-1.1V1.1M1439-0.8V0.8" stroke="#26ab76" stroke-width="1.050"/></g></svg>
<svg style="left:0;top:0" width="1902" height="944"><g transform="translate(439.5,677.2)"><path d="M-0.500 0H1463" stroke="#26ab76" stroke-width="1.300"/><path d="M0-4.3V4.3M1-7V7M2-5.7V5.7M3-6.8V6.8M4-6.3V6.3M5-6V6M6-5V5M7-6.8V6.8M8-5.1V5.1M9-6.2V6.2M10-4.9V4.9M11-9.6V9.6M12-4.3V4.3M13-4.1V4.1M14-4.9V4.9M15-4.8V4.8M16-4.6V4.6M17-3.6V3.6M18-3.5V3.5M19-3.7V3.7M20-3.9V3.9M21-3.7V3.7M22-3.8V3.8M23-3.6V3.6M24-3.1V3.1M25-3.3V3.3M26-3.3V3.3M27-2.5V2.5M28-3.3V3.3M29-2.7V2.7M30-2.8V2.8M31-2.7V2.7M32-2.7V2.7M33-2V2M34-2V2M35-2.1V2.1M36-1.9V1.9M37-2.4V2.4M38-2.1V2.1M39-1.8V1.8M40-2V2M41-1.8V1.8M42-2.2V2.2M43-1.9V1.9M44-5.1V5.1M45-7.7V7.7M46-7.8V7.8M47-7.7V7.7M48-8.5V8.5M49-7.3V7.3M50-6.1V6.1M51-5.7V5.7M52-6.5V6.5M53-5.7V5.7M54-5.5V5.5M55-4.2V4.2M56-4.5V4.5M57-3.5V3.5M58-9.2V9.2M59-3.2V3.2M60-4V4M61-3.1V3.1M62-2.9V2.9M63-2.9V2.9M64-3.1V3.1M65-3.1V3.1M66-2.7V2.7M67-3V3M68-2.8V2.8M69-9.2V9.2M70-2.4V2.4M71-2.9V2.9M72-2.4V2.4M73-2.6V2.6M74-2.4V2.4M75-2.3V2.3M76-2.4V2.4M77-3.2V3.2M78-6.3V6.3M79-7.9V7.9M80-6.5V6.5M81-4.9V4.9M82-6.7V6.7M83-5.9V5.9M84-4.8V4.8M85-4.1V4.1M86-3.6V3.6M87-5V5M88-4.6V4.6M89-3.2V3.2M90-3.1V3.1M91-3.7V3.7M92-2.8V2.8M93-3.2V3.2M94-2.8V2.8M95-2.9V2.9M96-2.9V2.9M97-2.4V2.4M98-2.3V2.3M99-2.1V2.1M100-2.8V2.8M101-2.2V2.2M102-1.8V1.8M103-2.1V2.1M104-2.2V2.2M105-2.3V2.3M106-3.2V3.2M107-6.2V6.2M108-6.5V6.5M109-6.7V6.7M110-9.3V9.3M111-4.5V4.5M112-3.8V3.8M113-4.6V4.6M114-4.4V4.4M115-3.8V3.8M116-4.4V4.4M117-3.2V3.2M118-3.8V3.8M119-3.8V3.8M120-3V3M121-2.4V2.4M122-2.9V2.9M123-8V8M124-3V3M125-2.8V2.8M126-2.3V2.3M127-2.4V2.4M128-1.9V1.9M129-2.3V2.3M130-2.3V2.3M131-2V2M132-1.8V1.8M133-1.5V1.5M134-3.7V3.7M135-5.8V5.8M136-8.1V8.1M137-5.9V5.9M138-5.2V5.2M139-5.7V5.7M140-5.9V5.9M141-5.2V5.2M142-6.1V6.1M143-5V5M144-4.5V4.5M145-4.4V4.4M146-5.4V5.4M147-3.9V3.9M148-4.7V4.7M149-4.3V4.3M150-3.8V3.8M151-4.5V4.5M152-4.1V4.1M153-4.3V4.3M154-3.4V3.4M155-3.9V3.9M156-3.4V3.4M157-3.6V3.6M158-3.6V3.6M159-2.9V2.9M160-3.1V3.1M161-3.4V3.4M162-2.4V2.4M163-3.2V3.2M164-2.5V2.5M165-2.9V2.9M166-2.2V2.2M167-3V3M168-2.5V2.5M169-2V2M170-2.2V2.2M171-2.4V2.4M172-2.4V2.4M173-2V2M174-2.5V2.5M175-7.7V7.7M176-1.8V1.8M177-2.2V2.2M178-2.3V2.3M179-2.1V2.1M180-2.9V2.9M181-4.8V4.8M182-6.4V6.4M183-4.6V4.6M184-4.9V4.9M185-5.2V5.2M186-4.3V4.3M187-5.4V5.4M188-5.2V5.2M189-4.8V4.8M190-3.9V3.9M191-4.7V4.7M192-4.4V4.4M193-3.8V3.8M194-3.2V3.2M195-2.9V2.9M196-3.5V3.5M197-2.7V2.7M198-3.3V3.3M199-2.5V2.5M200-3.3V3.3M201-3.3V3.3M202-3.2V3.2M203-3.1V3.1M204-2.8V2.8M205-2.9V2.9M206-2.2V2.2M207-2.6V2.6M208-2.5V2.5M209-2.3V2.3M210-2.2V2.2M211-2.3V2.3M212-1.7V1.7M213-1.8V1.8M214-1.9V1.9M215-2.3V2.3M216-2V2M217-1.8V1.8M218-1.7V1.7M219-1.7V1.7M220-2.1V2.1M221-2.7V2.7M222-5.1V5.1M223-6.8V6.8M224-6.6V6.6M225-4.5V4.5M226-4.9V4.9M227-4.1V4.1M228-4.4V4.4M229-4.3V4.3M230-3.8V3.8M231-5V5M232-3.3V3.3M233-3.5V3.5M234-4V4M235-3.6V3.6M236-3.6V3.6M237-2.7V2.7M238-3V3M239-3.1V3.1M240-2.5V2.5M241-2.7V2.7M242-2.8V2.8M243-2.7V2.7M244-2.7V2.7M245-2.2V2.2M246-2.6V2.6M247-2.7V2.7M248-2.1V2.1M249-2.3V2.3M250-2.1V2.1M251-1.9V1.9M252-2.5V2.5M253-2V2M254-1.6V1.6M255-1.8V1.8M256-1.6V1.6M257-1.6V1.6M258-1.8V1.8M259-1.7V1.7M260-3.1V3.1M261-5.2V5.2M262-4.8V4.8M263-4.4V4.4M264-4.4V4.4M265-4.4V4.4M266-4V4M267-3.8V3.8M268-4.7V4.7M269-3.2V3.2M270-4.1V4.1M271-3.5V3.5M272-3.5V3.5M273-3.7V3.7M274-3.1V3.1M275-3.4V3.4M276-2.6V2.6M277-3V3M278-2.2V2.2M279-2.5V2.5M280-2.2V2.2M281-2.7V2.7M282-2.7V2.7M283-2.6V2.6M284-2.2V2.2M285-2.1V2.1M286-2.1V2.1M287-2.2V2.2M288-2.3V2.3M289-1.8V1.8M290-2.3V2.3M291-1.8V1.8M292-1.9V1.9M293-1.4V1.4M294-1.5V1.5M295-3.6V3.6M296-6V6M297-5.4V5.4M298-5.6V5.6M299-4.4V4.4M300-4V4M301-4.6V4.6M302-4.2V4.2M303-4V4M304-3V3M305-3.2V3.2M306-3.3V3.3M307-3.5V3.5M308-2.5V2.5M309-3V3M310-2.8V2.8M311-2V2M312-2.5V2.5M313-2.6V2.6M314-2.2V2.2M315-2V2M316-2.1V2.1M317-1.8V1.8M318-2.9V2.9M319-4.9V4.9M320-4.6V4.6M321-7.3V7.3M322-6.4V6.4M323-5.1V5.1M324-5.1V5.1M325-6.3V6.3M326-6.5V6.5M327-5.9V5.9M328-7.2V7.2M329-4.6V4.6M330-5.7V5.7M331-4.8V4.8M332-6.2V6.2M333-4.7V4.7M334-4.8V4.8M335-5.5V5.5M336-10.5V10.5M337-4.1V4.1M338-4.7V4.7M339-5.3V5.3M340-9.8V9.8M341-3.8V3.8M342-11.9V11.9M343-4.4V4.4M344-3.6V3.6M345-4.4V4.4M346-4.2V4.2M347-6.4V6.4M348-8.7V8.7M349-8.2V8.2M350-5.1V5.1M351-7.4V7.4M352-7.8V7.8M353-7.6V7.6M354-5.3V5.3M355-5.1V5.1M356-7.1V7.1M357-6.1V6.1M358-6.3V6.3M359-5.6V5.6M360-5.7V5.7M361-5.8V5.8M362-5.6V5.6M363-6.2V6.2M364-5.5V5.5M365-4.3V4.3M366-6.2V6.2M367-9.3V9.3M368-5.6V5.6M369-10.4V10.4M370-4.4V4.4M371-3.6V3.6M372-5V5M373-6.6V6.6M374-10.3V10.3M375-5.9V5.9M376-6.9V6.9M377-7.5V7.5M378-8.7V8.7M379-7.8V7.8M380-5.1V5.1M381-6.5V6.5M382-5.5V5.5M383-5.9V5.9M384-6.1V6.1M385-5.3V5.3M386-6.7V6.7M387-5.9V5.9M388-4.6V4.6M389-4.9V4.9M390-4.9V4.9M391-4.8V4.8M392-5.8V5.8M393-6V6M394-9V9M395-4.7V4.7M396-4.4V4.4M397-4.8V4.8M398-5.7V5.7M399-6.9V6.9M400-8.9V8.9M401-7.1V7.1M402-8.5V8.5M403-8.6V8.6M404-5.8V5.8M405-6.4V6.4M406-6.2V6.2M407-7.2V7.2M408-7.2V7.2M409-6.3V6.3M410-4.9V4.9M411-5.1V5.1M412-10.5V10.5M413-11.6V11.6M414-6.5V6.5M415-5.5V5.5M416-4.4V4.4M417-5.2V5.2M418-5V5M419-4.2V4.2M420-4.8V4.8M421-6.2V6.2M422-5.9V5.9M423-4V4M424-3.9V3.9M425-6.1V6.1M426-10.9V10.9M427-8.6V8.6M428-15.5V15.5M429-5.9V5.9M430-6.2V6.2M431-5.4V5.4M432-7.9V7.9M433-7.7V7.7M434-8.7V8.7M435-6.9V6.9M436-5.6V5.6M437-6.1V6.1M438-5.2V5.2M439-11.9V11.9M440-5.1V5.1M441-5.1V5.1M442-5.3V5.3M443-4.5V4.5M444-6.3V6.3M445-6.7V6.7M446-5.7V5.7M447-4.3V4.3M448-4.9V4.9M449-5V5M450-4.1V4.1M451-9.8V9.8M452-6.7V6.7M453-8.4V8.4M454-6.5V6.5M455-6.1V6.1M456-8.1V8.1M457-10.7V10.7M458-6.3V6.3M459-6.5V6.5M460-7.5V7.5M461-6.3V6.3M462-6.4V6.4M463-8.7V8.7M464-5.7V5.7M465-4.6V4.6M466-10.4V10.4M467-6V6M468-7V7M469-6.9V6.9M470-4.4V4.4M471-4.6V4.6M472-5.9V5.9M473-5.7V5.7M474-4.6V4.6M475-17.1V17.1M476-4.8V4.8M477-6.9V6.9M478-8.2V8.2M479-8V8M480-8.5V8.5M481-8V8M482-9.3V9.3M483-7.2V7.2M484-5.7V5.7M485-5.8V5.8M486-7.1V7.1M487-10V10M488-6.2V6.2M489-4.8V4.8M490-6V6M491-5.4V5.4M492-6.6V6.6M493-6.5V6.5M494-5.7V5.7M495-9V9M496-6.3V6.3M497-17.3V17.3M498-9V9M499-4.8V4.8M500-5.3V5.3M501-5.7V5.7M502-4.9V4.9M503-8.4V8.4M504-7.3V7.3M505-11.5V11.5M506-8.4V8.4M507-10V10M508-11.8V11.8M509-5V5M510-7V7M511-6.1V6.1M512-10.5V10.5M513-17.1V17.1M514-7V7M515-5.9V5.9M516-6V6M517-8.9V8.9M518-4.2V4.2M519-4.6V4.6M520-4.5V4.5M521-5.3V5.3M522-4.1V4.1M523-5.2V5.2M524-3.7V3.7M525-5.3V5.3M526-3.5V3.5M527-3.8V3.8M528-4.5V4.5M529-6V6M530-7.9V7.9M531-11.3V11.3M532-5.8V5.8M533-7.8V7.8M534-5.4V5.4M535-7.5V7.5M536-5.6V5.6M537-5.4V5.4M538-4.5V4.5M539-6.9V6.9M540-6V6M541-5.5V5.5M542-10V10M543-4.9V4.9M544-9.1V9.1M545-4.8V4.8M546-4.2V4.2M547-4.7V4.7M548-4.9V4.9M549-4V4M550-4.6V4.6M551-3.9V3.9M552-9.1V9.1M553-5.1V5.1M554-4.9V4.9M555-7V7M556-12V12M557-5.7V5.7M558-6.7V6.7M559-9.9V9.9M560-5.7V5.7M561-6.6V6.6M562-7.1V7.1M563-10.8V10.8M564-7.1V7.1M565-4.9V4.9M566-8.8V8.8M567-5.3V5.3M568-4.1V4.1M569-5.4V5.4M570-5.7V5.7M571-10.5V10.5M572-5V5M573-10.6V10.6M574-3.7V3.7M575-4V4M576-4.5V4.5M577-11.3V11.3M578-4.9V4.9M579-4.3V4.3M580-3.1V3.1M581-7.6V7.6M582-8.1V8.1M583-5.1V5.1M584-5.5V5.5M585-11V11M586-10.2V10.2M587-11.3V11.3M588-7.2V7.2M589-6.5V6.5M590-5.6V5.6M591-6.6V6.6M592-5.4V5.4M593-9.2V9.2M594-6.2V6.2M595-5V5M596-6.2V6.2M597-4.9V4.9M598-11.1V11.1M599-4.4V4.4M600-4.9V4.9M601-11.7V11.7M602-3.8V3.8M603-3.9V3.9M604-4.2V4.2M605-4.2V4.2M606-4V4M607-8.9V8.9M608-7.5V7.5M609-6.1V6.1M610-7.9V7.9M611-6.4V6.4M612-9.2V9.2M613-11.9V11.9M614-4.9V4.9M615-4.7V4.7M616-6.6V6.6M617-7V7M618-5.6V5.6M619-5.6V5.6M620-5.5V5.5M621-4.9V4.9M622-5.8V5.8M623-4.7V4.7M624-11.5V11.5M625-5.4V5.4M626-11.7V11.7M627-5.7V5.7M628-5.3V5.3M629-5.1V5.1M630-3.6V3.6M631-4.9V4.9M632-3.9V3.9M633-5.7V5.7M634-11.6V11.6M635-6.4V6.4M636-8.8V8.8M637-5.6V5.6M638-6.7V6.7M639-11.3V11.3M640-7V7M641-6.3V6.3M642-7.5V7.5M643-7.2V7.2M644-7.3V7.3M645-5.7V5.7M646-6.7V6.7M647-10V10M648-6.3V6.3M649-10.4V10.4M650-4.5V4.5M651-8.5V8.5M652-11.7V11.7M653-8.5V8.5M654-8.5V8.5M655-4.5V4.5M656-5.5V5.5M657-5.5V5.5M658-3.9V3.9M659-5.7V5.7M660-6.5V6.5M661-6V6M662-6.6V6.6M663-5.9V5.9M664-5.8V5.8M665-5.4V5.4M666-7V7M667-10V10M668-5.2V5.2M669-5.5V5.5M670-9.1V9.1M671-4.8V4.8M672-4.7V4.7M673-9.6V9.6M674-5.1V5.1M675-9.1V9.1M676-6.3V6.3M677-5.1V5.1M678-4.9V4.9M679-5.9V5.9M680-9.4V9.4M681-6.1V6.1M682-6.2V6.2M683-5.1V5.1M684-3.9V3.9M685-7.7V7.7M686-5.9V5.9M687-8.4V8.4M688-5.8V5.8M689-5.6V5.6M690-6.3V6.3M691-6.5V6.5M692-7.3V7.3M693-5.7V5.7M694-8.2V8.2M695-5V5M696-10.9V10.9M697-6.3V6.3M698-6V6M699-5.6V5.6M700-5.6V5.6M701-4.7V4.7M702-6.1V6.1M703-4.5V4.5M704-11.4V11.4M705-4.4V4.4M706-11V11M707-5.1V5.1M708-6.2V6.2M709-5.4V5.4M710-4V4M711-9.1V9.1M712-7.1V7.1M713-6.9V6.9M714-9.1V9.1M715-8.5V8.5M716-6.4V6.4M717-6.1V6.1M718-10.4V10.4M719-11.4V11.4M720-9.9V9.9M721-6V6M722-6V6M723-5V5M724-7.1V7.1M725-7V7M726-5.3V5.3M727-6.8V6.8M728-6.8V6.8M729-6.1V6.1M730-6.3V6.3M731-6.5V6.5M732-4.9V4.9M733-4.1V4.1M734-5.4V5.4M735-4.7V4.7M736-4.7V4.7M737-8.1V8.1M738-9.1V9.1M739-12V12M740-7.7V7.7M741-6.3V6.3M742-6.6V6.6M743-6.2V6.2M744-10.2V10.2M745-8V8M746-5.3V5.3M747-6.9V6.9M748-7.2V7.2M749-6.7V6.7M750-6.8V6.8M751-7V7M752-4.5V4.5M753-6.4V6.4M754-6.6V6.6M755-11.5V11.5M756-4.1V4.1M757-5.1V5.1M758-5.4V5.4M759-3.8V3.8M760-5.8V5.8M761-3.7V3.7M762-11.2V11.2M763-7.2V7.2M764-5.5V5.5M765-7.7V7.7M766-8.6V8.6M767-6.8V6.8M768-6.9V6.9M769-6.3V6.3M770-7.6V7.6M771-5V5M772-6.6V6.6M773-11.8V11.8M774-7.4V7.4M775-5.7V5.7M776-5.3V5.3M777-6.7V6.7M778-5V5M779-5.3V5.3M780-6.3V6.3M781-4.9V4.9M782-4.3V4.3M783-4.6V4.6M784-8.9V8.9M785-3.9V3.9M786-4V4M787-4.7V4.7M788-5.3V5.3M789-5.4V5.4M790-6.6V6.6M791-7.9V7.9M792-5.5V5.5M793-8.7V8.7M794-6.3V6.3M795-5V5M796-5.3V5.3M797-6.7V6.7M798-6.1V6.1M799-4.7V4.7M800-4.6V4.6M801-4.4V4.4M802-4.4V4.4M803-4.7V4.7M804-4.7V4.7M805-5.4V5.4M806-4.2V4.2M807-4.2V4.2M808-4V4M809-4.7V4.7M810-4.9V4.9M811-3.5V3.5M812-3.8V3.8M813-5.1V5.1M814-4.5V4.5M815-6.9V6.9M816-10.1V10.1M817-5.2V5.2M818-5V5M819-5.9V5.9M820-6.1V6.1M821-7.4V7.4M822-4.7V4.7M823-6.6V6.6M824-5.9V5.9M825-6.1V6.1M826-5.1V5.1M827-6.3V6.3M828-6.2V6.2M829-4.9V4.9M830-5.3V5.3M831-4.4V4.4M832-3.8V3.8M833-4.4V4.4M834-11.3V11.3M835-4V4M836-5.3V5.3M837-3.8V3.8M838-4.7V4.7M839-11.1V11.1M840-4.6V4.6M841-8.2V8.2M842-5.3V5.3M843-7.5V7.5M844-7.4V7.4M845-5.5V5.5M846-11.3V11.3M847-7.4V7.4M848-5.6V5.6M849-10.4V10.4M850-11.4V11.4M851-4.4V4.4M852-6.5V6.5M853-5.6V5.6M854-4.2V4.2M855-5.7V5.7M856-5.5V5.5M857-10.8V10.8M858-6V6M859-4.9V4.9M860-5.5V5.5M861-8.8V8.8M862-11V11M863-4.2V4.2M864-5.1V5.1M865-4.2V4.2M866-3.1V3.1M867-6.1V6.1M868-5.2V5.2M869-7.2V7.2M870-5.5V5.5M871-7V7M872-7.5V7.5M873-6.2V6.2M874-6.2V6.2M875-5.6V5.6M876-4.9V4.9M877-5.4V5.4M878-6.5V6.5M879-6.5V6.5M880-6V6M881-4.3V4.3M882-5.9V5.9M883-6.3V6.3M884-6.1V6.1M885-5.8V5.8M886-5.5V5.5M887-5.6V5.6M888-3.8V3.8M889-4.4V4.4M890-4V4M891-3.8V3.8M892-11.5V11.5M893-7.5V7.5M894-6.9V6.9M895-6.5V6.5M896-6.8V6.8M897-5.8V5.8M898-7.7V7.7M899-11.1V11.1M900-5.4V5.4M901-6.9V6.9M902-4.7V4.7M903-5.7V5.7M904-9V9M905-4.7V4.7M906-5.5V5.5M907-4.8V4.8M908-6.5V6.5M909-6.1V6.1M910-6.3V6.3M911-5.5V5.5M912-4.1V4.1M913-4.3V4.3M914-4.5V4.5M915-5.5V5.5M916-3.8V3.8M917-4.1V4.1M918-10.6V10.6M919-9.5V9.5M920-6.1V6.1M921-6.9V6.9M922-8.5V8.5M923-6.9V6.9M924-5.8V5.8M925-8.2V8.2M926-5.2V5.2M927-6.3V6.3M928-8.5V8.5M929-5.8V5.8M930-4.9V4.9M931-5.9V5.9M932-5.4V5.4M933-6.1V6.1M934-5.2V5.2M935-6.4V6.4M936-4.3V4.3M937-6.4V6.4M938-6.2V6.2M939-4.8V4.8M940-9.1V9.1M941-4V4M942-10.6V10.6M943-4.6V4.6M944-4.1V4.1M945-8.3V8.3M946-6.2V6.2M947-8V8M948-6.2V6.2M949-6.3V6.3M950-6.3V6.3M951-8.2V8.2M952-9V9M953-5.1V5.1M954-6.5V6.5M955-7.4V7.4M956-7V7M957-8.7V8.7M958-5.6V5.6M959-4.7V4.7M960-6.1V6.1M961-6.9V6.9M962-11.8V11.8M963-6.3V6.3M964-10.3V10.3M965-6.1V6.1M966-6.1V6.1M967-10.9V10.9M968-5.3V5.3M969-9.9V9.9M970-4.5V4.5M971-9.3V9.3M972-7.5V7.5M973-8.7V8.7M974-6.3V6.3M975-7.7V7.7M976-5.8V5.8M977-8.1V8.1M978-8.2V8.2M979-8.4V8.4M980-6.6V6.6M981-9.5V9.5M982-5.6V5.6M983-7.6V7.6M984-5.7V5.7M985-5V5M986-5.8V5.8M987-4.5V4.5M988-4.6V4.6M989-5.3V5.3M990-4.3V4.3M991-5.9V5.9M992-4.6V4.6M993-6V6M994-5.3V5.3M995-5.8V5.8M996-5.6V5.6M997-9.4V9.4M998-7.5V7.5M999-8.5V8.5M1000-6.6V6.6M1001-6.3V6.3M1002-5.6V5.6M1003-8.3V8.3M1004-5.5V5.5M1005-6.4V6.4M1006-5.2V5.2M1007-11.5V11.5M1008-6.6V6.6M1009-6.8V6.8M1010-11.9V11.9M1011-4.7V4.7M1012-6.7V6.7M1013-4.8V4.8M1014-5.1V5.1M1015-4.7V4.7M1016-11.4V11.4M1017-6.4V6.4M1018-5.1V5.1M1019-11.1V11.1M1020-5.3V5.3M1021-5.4V5.4M1022-4.2V4.2M1023-7.3V7.3M1024-7.7V7.7M1025-6.8V6.8M1026-7.6V7.6M1027-8.2V8.2M1028-8.8V8.8M1029-6.4V6.4M1030-7V7M1031-6.8V6.8M1032-5.5V5.5M1033-6.7V6.7M1034-11.2V11.2M1035-6.5V6.5M1036-7V7M1037-5.6V5.6M1038-6.8V6.8M1039-5.6V5.6M1040-11V11M1041-5V5M1042-11.2V11.2M1043-9V9M1044-5.7V5.7M1045-4.3V4.3M1046-4.2V4.2M1047-4.9V4.9M1048-3.5V3.5M1049-8V8M1050-9.2V9.2M1051-8.4V8.4M1052-6.6V6.6M1053-6.3V6.3M1054-5.3V5.3M1055-6.6V6.6M1056-7.5V7.5M1057-5.3V5.3M1058-7V7M1059-5.5V5.5M1060-6V6M1061-5.5V5.5M1062-8.8V8.8M1063-6V6M1064-5.7V5.7M1065-4.4V4.4M1066-6.3V6.3M1067-5.2V5.2M1068-9.8V9.8M1069-8.6V8.6M1070-5.1V5.1M1071-4.3V4.3M1072-5.2V5.2M1073-9.3V9.3M1074-14.1V14.1M1075-10.9V10.9M1076-6V6M1077-6.1V6.1M1078-6.1V6.1M1079-9.1V9.1M1080-10.8V10.8M1081-6.7V6.7M1082-11.7V11.7M1083-7.3V7.3M1084-4.6V4.6M1085-4.9V4.9M1086-9.7V9.7M1087-5.6V5.6M1088-5.7V5.7M1089-5V5M1090-6V6M1091-4.8V4.8M1092-6V6M1093-4.1V4.1M1094-5.1V5.1M1095-3.9V3.9M1096-8.8V8.8M1097-5.2V5.2M1098-4.2V4.2M1099-3.7V3.7M1100-4.9V4.9M1101-8V8M1102-5.7V5.7M1103-6.4V6.4M1104-7V7M1105-10.2V10.2M1106-6.3V6.3M1107-6V6M1108-7V7M1109-4.5V4.5M1110-5.1V5.1M1111-6.9V6.9M1112-5.6V5.6M1113-4.9V4.9M1114-5.5V5.5M1115-4.5V4.5M1116-5.4V5.4M1117-11.8V11.8M1118-17.4V17.4M1119-4.1V4.1M1120-16V16M1121-5.3V5.3M1122-3.8V3.8M1123-4.4V4.4M1124-4V4M1125-3.2V3.2M1126-14.4V14.4M1127-6.9V6.9M1128-5.1V5.1M1129-6.8V6.8M1130-7.8V7.8M1131-5.2V5.2M1132-7.2V7.2M1133-10.2V10.2M1134-5.9V5.9M1135-11.1V11.1M1136-6.7V6.7M1137-6.8V6.8M1138-6.7V6.7M1139-5.5V5.5M1140-8.9V8.9M1141-5.6V5.6M1142-6V6M1143-11V11M1144-4.1V4.1M1145-4.8V4.8M1146-15.3V15.3M1147-4.6V4.6M1148-10.6V10.6M1149-11V11M1150-4.7V4.7M1151-3.8V3.8M1152-4.1V4.1M1153-6.8V6.8M1154-6.7V6.7M1155-7.5V7.5M1156-5.9V5.9M1157-5.1V5.1M1158-5.9V5.9M1159-7.4V7.4M1160-5.7V5.7M1161-7.3V7.3M1162-4.9V4.9M1163-6.4V6.4M1164-7.1V7.1M1165-6.7V6.7M1166-5.9V5.9M1167-17.5V17.5M1168-5.5V5.5M1169-5.3V5.3M1170-4.2V4.2M1171-11.4V11.4M1172-4.5V4.5M1173-4.7V4.7M1174-11.7V11.7M1175-4.7V4.7M1176-4.4V4.4M1177-11.6V11.6M1178-4.8V4.8M1179-8.4V8.4M1180-6.1V6.1M1181-6.5V6.5M1182-6.8V6.8M1183-6.5V6.5M1184-7.9V7.9M1185-7.2V7.2M1186-6.2V6.2M1187-7.2V7.2M1188-6V6M1189-8.9V8.9M1190-8.7V8.7M1191-7V7M1192-6.3V6.3M1193-6.3V6.3M1194-5V5M1195-5.6V5.6M1196-6.4V6.4M1197-8.6V8.6M1198-4V4M1199-10.8V10.8M1200-5.9V5.9M1201-5.5V5.5M1202-5.3V5.3M1203-5.6V5.6M1204-9.8V9.8M1205-6.3V6.3M1206-7.2V7.2M1207-6.4V6.4M1208-5.9V5.9M1209-8.4V8.4M1210-6.7V6.7M1211-11.9V11.9M1212-10V10M1213-7.5V7.5M1214-7.9V7.9M1215-5.7V5.7M1216-7.8V7.8M1217-5.1V5.1M1218-8.6V8.6M1219-4.8V4.8M1220-5.1V5.1M1221-6.8V6.8M1222-6.1V6.1M1223-6.3V6.3M1224-6.2V6.2M1225-8.8V8.8M1226-5V5M1227-5.3V5.3M1228-4.3V4.3M1229-11.1V11.1M1230-5.3V5.3M1231-11.4V11.4M1232-11.9V11.9M1233-8.6V8.6M1234-8.9V8.9M1235-7.4V7.4M1236-8.2V8.2M1237-7.9V7.9M1238-8.3V8.3M1239-6.5V6.5M1240-6.9V6.9M1241-7.6V7.6M1242-5.3V5.3M1243-6.3V6.3M1244-7.3V7.3M1245-6.7V6.7M1246-9.4V9.4M1247-8.6V8.6M1248-4.5V4.5M1249-4.5V4.5M1250-5.2V5.2M1251-5.6V5.6M1252-4.2V4.2M1253-10.5V10.5M1254-4.1V4.1M1255-4.3V4.3M1256-5.7V5.7M1257-7.7V7.7M1258-7.1V7.1M1259-6.1V6.1M1260-8.6V8.6M1261-6.3V6.3M1262-9.3V9.3M1263-8.3V8.3M1264-6.9V6.9M1265-8V8M1266-6.9V6.9M1267-6.9V6.9M1268-8.5V8.5M1269-8.8V8.8M1270-9.4V9.4M1271-9.3V9.3M1272-6.7V6.7M1273-5.1V5.1M1274-4.9V4.9M1275-4.1V4.1M1276-4.7V4.7M1277-5.6V5.6M1278-8.4V8.4M1279-3.9V3.9M1280-4.2V4.2M1281-3.4V3.4M1282-3.2V3.2M1283-10.2V10.2M1284-8.9V8.9M1285-6.8V6.8M1286-6.6V6.6M1287-5.6V5.6M1288-6.4V6.4M1289-6.9V6.9M1290-5V5M1291-4.3V4.3M1292-4.4V4.4M1293-5.5V5.5M1294-5.3V5.3M1295-8.9V8.9M1296-4.2V4.2M1297-8.8V8.8M1298-4.3V4.3M1299-4.6V4.6M1300-5V5M1301-5V5M1302-4.9V4.9M1303-4.1V4.1M1304-3.6V3.6M1305-3.9V3.9M1306-6.6V6.6M1307-4V4M1308-3.5V3.5M1309-6.4V6.4M1310-6.6V6.6M1311-4.4V4.4M1312-5.4V5.4M1313-6.3V6.3M1314-5V5M1315-3.3V3.3M1316-10.8V10.8M1317-3.4V3.4M1318-3.6V3.6M1319-6.9V6.9M1320-3.2V3.2M1321-5.8V5.8M1322-6.6V6.6M1323-3.6V3.6M1324-6.1V6.1M1325-3.1V3.1M1326-2.3V2.3M1327-10V10M1328-2V2M1329-2.3V2.3M1330-2.7V2.7M1331-2.5V2.5M1332-6V6M1333-2.6V2.6M1334-2.5V2.5M1335-4.5V4.5M1336-4.5V4.5M1337-3.5V3.5M1338-4V4M1339-3.4V3.4M1340-3.1V3.1M1341-4.6V4.6M1342-4.6V4.6M1343-3.5V3.5M1344-7.1V7.1M1345-4.1V4.1M1346-3V3M1347-4.2V4.2M1348-2.8V2.8M1349-2.8V2.8M1350-4.4V4.4M1351-3.8V3.8M1352-2.7V2.7M1353-4V4M1354-2.6V2.6M1355-7.8V7.8M1356-6.2V6.2M1357-2.8V2.8M1358-2.4V2.4M1359-3V3M1360-2.5V2.5M1361-6.6V6.6M1362-4.1V4.1M1363-4.1V4.1M1364-3.3V3.3M1365-2.9V2.9M1366-4.6V4.6M1367-5.8V5.8M1368-3.4V3.4M1369-5.2V5.2M1370-2.4V2.4M1371-2.4V2.4M1372-2.5V2.5M1373-2.7V2.7M1374-2.3V2.3M1375-4V4M1376-2.2V2.2M1377-2.6V2.6M1378-2.2V2.2M1379-1.9V1.9M1380-1.9V1.9M1381-1.7V1.7M1382-2.3V2.3M1383-2.4V2.4M1384-2.4V2.4M1385-1.8V1.8M1386-2V2M1387-3.1V3.1M1388-3V3M1389-4.2V4.2M1390-6.2V6.2M1391-4V4M1392-2.7V2.7M1393-2.5V2.5M1394-2.6V2.6M1395-2.5V2.5M1396-3.3V3.3M1397-3V3M1398-3.5V3.5M1399-3.4V3.4M1400-2.7V2.7M1401-2.6V2.6M1402-5V5M1403-2.7V2.7M1404-3.9V3.9M1405-1.9V1.9M1406-1.9V1.9M1407-1.8V1.8M1408-1.8V1.8M1409-1.7V1.7M1410-3.7V3.7M1411-1.6V1.6M1412-1.5V1.5M1413-2.1V2.1M1414-1.9V1.9M1415-1.9V1.9M1416-1.9V1.9M1417-2V2M1418-1.8V1.8M1419-2.8V2.8M1420-1.9V1.9M1421-1.3V1.3M1422-1.3V1.3M1423-1V1M1424-1.4V1.4M1425-1.1V1.1M1426-1V1M1427-1.9V1.9M1428-1.1V1.1M1429-0.7V0.7M1430-0.9V0.9M1431-0.7V0.7M1432-1.3V1.3" stroke="#26ab76" stroke-width="1.050"/></g></svg>
<svg style="left:0;top:0" width="1902" height="944"><g transform="translate(439.5,797.2)"><path d="M-0.500 0H1463" stroke="#26ab76" stroke-width="1.300"/><path d="M27-2.1V2.1M28-2.5V2.5M29-2.3V2.3M30-1.4V1.4M31-1V1M33-1.3V1.3M34-1.1V1.1M35-1.1V1.1M36-1.8V1.8M37-1.5V1.5M38-1.4V1.4M39-1V1M40-1.7V1.7M42-1.6V1.6M43-1.7V1.7M44-1V1M46-1.7V1.7M47-1.4V1.4M49-1.1V1.1M50-1.5V1.5M51-1.2V1.2M52-1.1V1.1M53-1.5V1.5M54-1.2V1.2M55-1.5V1.5M57-1.1V1.1M58-1V1M60-1.2V1.2M61-1.5V1.5M62-1.2V1.2M63-1.4V1.4M65-1V1M66-1.5V1.5M67-1.2V1.2M68-1.2V1.2M69-1.3V1.3M70-0.9V0.9M71-1.1V1.1M72-1V1M73-1.3V1.3M74-1V1M76-0.8V0.8M77-1.5V1.5M78-1.4V1.4M80-1.4V1.4M81-0.8V0.8M82-1.4V1.4M83-1.2V1.2M87-1.5V1.5M88-1.1V1.1M89-1.2V1.2M90-1.4V1.4M91-0.9V0.9M94-1.2V1.2M95-1.5V1.5M98-1.4V1.4M99-1.3V1.3M101-1V1M103-1.4V1.4M105-1.3V1.3M106-1V1M107-0.9V0.9M108-0.8V0.8M109-0.8V0.8M110-1.1V1.1M111-0.8V0.8M112-1.2V1.2M113-1.4V1.4M114-1V1M115-1.2V1.2M116-1.4V1.4M117-1.3V1.3M119-1.1V1.1M121-0.8V0.8M122-0.9V0.9M123-0.8V0.8M124-0.9V0.9M125-1.4V1.4M126-1.4V1.4M127-1.3V1.3M128-1.3V1.3M129-1.4V1.4M130-0.8V0.8M131-1.1V1.1M132-1V1M133-0.8V0.8M134-0.8V0.8M135-1.3V1.3M137-1.2V1.2M138-1.3V1.3M139-0.8V0.8M140-1.4V1.4M141-1V1M142-0.8V0.8M143-1.1V1.1M145-0.9V0.9M151-0.8V0.8M157-0.7V0.7M159-0.7V0.7M160-0.7V0.7M167-0.7V0.7M173-0.7V0.7M174-0.9V0.9M175-1.2V1.2M176-1V1M177-0.9V0.9M178-1.5V1.5M179-1.5V1.5M180-1V1M181-1.3V1.3M182-1.4V1.4M183-2V2M184-2.3V2.3M185-1.4V1.4M186-1.8V1.8M187-2.1V2.1M188-2.4V2.4M189-2.5V2.5M190-2V2M191-1.6V1.6M192-1.6V1.6M193-2.3V2.3M194-2.1V2.1M195-1.5V1.5M196-2.9V2.9M197-2.5V2.5M198-2.8V2.8M199-2.1V2.1M200-2.3V2.3M201-2.1V2.1M202-1.9V1.9M203-3.2V3.2M204-3.1V3.1M205-2.6V2.6M206-2.3V2.3M207-2.2V2.2M208-1.9V1.9M209-3V3M210-1.8V1.8M211-2.9V2.9M212-3.4V3.4M213-2V2M214-3.5V3.5M215-3.6V3.6M216-2.5V2.5M217-4.2V4.2M218-3V3M219-3.8V3.8M220-3.4V3.4M221-3.1V3.1M222-5.3V5.3M223-5.2V5.2M224-5.7V5.7M225-4.7V4.7M226-4.3V4.3M227-5.9V5.9M228-4.8V4.8M229-6.3V6.3M230-4.1V4.1M231-5V5M232-7.1V7.1M233-4.8V4.8M234-4.6V4.6M235-5.4V5.4M236-5.5V5.5M237-4.4V4.4M238-5.6V5.6M239-4.6V4.6M240-7.3V7.3M241-5V5M242-4.2V4.2M243-3.3V3.3M244-5.7V5.7M245-4.3V4.3M246-3.5V3.5M247-3.3V3.3M248-4.6V4.6M249-3.9V3.9M250-3.4V3.4M251-2.5V2.5M252-2.4V2.4M253-3.1V3.1M254-2.4V2.4M255-2.2V2.2M256-4.1V4.1M257-2.6V2.6M258-4V4M259-2.9V2.9M260-3.3V3.3M261-4V4M262-3.6V3.6M263-3.2V3.2M264-2.8V2.8M265-2.3V2.3M266-3.9V3.9M267-4.1V4.1M268-2.8V2.8M269-2.8V2.8M270-4V4M271-2.2V2.2M272-2.2V2.2M273-4.1V4.1M274-3V3M275-3V3M276-2.9V2.9M277-2.8V2.8M278-3.7V3.7M279-2.4V2.4M280-4.1V4.1M281-4.4V4.4M282-3.9V3.9M283-2.5V2.5M284-3.7V3.7M285-3.9V3.9M286-2.3V2.3M287-3.3V3.3M288-2.3V2.3M289-3.3V3.3M290-2.3V2.3M291-2.2V2.2M292-2.7V2.7M293-2.6V2.6M294-3.1V3.1M295-2.9V2.9M296-3.5V3.5M297-2.5V2.5M298-1.9V1.9M299-3.2V3.2M300-2.4V2.4M301-2.7V2.7M302-2V2M303-1.9V1.9M304-2.3V2.3M305-3V3M306-1.7V1.7M307-2.2V2.2M308-1.6V1.6M309-1.8V1.8M310-2.5V2.5M311-2.4V2.4M312-1.6V1.6M313-2.3V2.3M314-1.8V1.8M315-1.7V1.7M316-2.1V2.1M317-1.6V1.6M318-1.4V1.4M319-1.3V1.3M320-1.7V1.7M321-1.2V1.2M322-1V1M323-1.1V1.1M324-0.8V0.8M325-1V1M326-1.1V1.1M329-0.8V0.8M331-0.8V0.8M332-1.2V1.2M333-1.3V1.3M334-0.9V0.9M335-1V1M336-1.6V1.6M337-1.4V1.4M338-1.2V1.2M339-1.2V1.2M340-1.7V1.7M341-1.7V1.7M342-1.8V1.8M343-1.8V1.8M344-1.6V1.6M345-1.6V1.6M346-1.4V1.4M347-1.4V1.4M348-2.3V2.3M349-1.2V1.2M350-2.1V2.1M351-1.5V1.5M352-1.9V1.9M353-2.6V2.6M354-2.6V2.6M355-1.7V1.7M356-1.4V1.4M357-2.8V2.8M358-2.4V2.4M359-2.6V2.6M360-2.7V2.7M361-2.1V2.1M362-2.4V2.4M363-1.9V1.9M364-2V2M365-2.5V2.5M366-3.2V3.2M367-2.4V2.4M368-2.3V2.3M369-2.7V2.7M370-2V2M371-2.9V2.9M372-3.4V3.4M373-3V3M374-3.7V3.7M375-2.5V2.5M376-3.8V3.8M377-4V4M378-3.9V3.9M379-4V4M380-4.3V4.3M381-2.4V2.4M382-3.5V3.5M383-3.9V3.9M384-3.4V3.4M385-3.6V3.6M386-5.1V5.1M387-2.6V2.6M388-5.4V5.4M389-5.2V5.2M390-3.1V3.1M391-3.9V3.9M392-4.8V4.8M393-3.4V3.4M394-4V4M395-3.4V3.4M396-4.8V4.8M397-3.4V3.4M398-3.4V3.4M399-3.3V3.3M400-3.5V3.5M401-4.4V4.4M402-3.5V3.5M403-2.2V2.2M404-3.4V3.4M405-2.2V2.2M406-2.5V2.5M407-4V4M408-1.9V1.9M409-3.9V3.9M410-2.1V2.1M411-2.4V2.4M412-2.5V2.5M413-3.4V3.4M414-3.6V3.6M415-3.3V3.3M416-2.3V2.3M417-3.5V3.5M418-2.7V2.7M419-1.9V1.9M420-2.8V2.8M421-1.9V1.9M422-2.6V2.6M423-2.9V2.9M424-2.1V2.1M425-1.9V1.9M426-3.6V3.6M427-3.1V3.1M428-2.6V2.6M429-3.3V3.3M430-2.4V2.4M431-3.3V3.3M432-2.9V2.9M433-2.4V2.4M434-3.2V3.2M435-2.5V2.5M436-3V3M437-2.9V2.9M438-2.8V2.8M439-3.3V3.3M440-2V2M441-1.8V1.8M442-1.9V1.9M443-2.8V2.8M444-2.2V2.2M445-3.5V3.5M446-2.8V2.8M447-3V3M448-2.4V2.4M449-3.2V3.2M450-4.3V4.3M451-3.7V3.7M452-2.4V2.4M453-3.8V3.8M454-4.4V4.4M455-4V4M456-3.5V3.5M457-4.5V4.5M458-5.4V5.4M459-4V4M460-2.9V2.9M461-5.2V5.2M462-4.7V4.7M463-4.8V4.8M464-3.8V3.8M465-4.6V4.6M466-5V5M467-5.8V5.8M468-3.8V3.8M469-3.3V3.3M470-3V3M471-2.8V2.8M472-3.2V3.2M473-3.8V3.8M474-3.2V3.2M475-4.7V4.7M476-2.9V2.9M477-3.3V3.3M478-4.5V4.5M479-4.2V4.2M480-3V3M481-3.8V3.8M482-2.6V2.6M483-4.1V4.1M484-4.1V4.1M485-2.9V2.9M486-1.9V1.9M487-3.7V3.7M488-1.9V1.9M489-2.2V2.2M490-3.7V3.7M491-3.8V3.8M492-3.7V3.7M493-2.5V2.5M494-4V4M495-3.5V3.5M496-2.6V2.6M497-2.2V2.2M498-2.4V2.4M499-2.1V2.1M500-3.9V3.9M501-3.8V3.8M502-3.9V3.9M503-4.2V4.2M504-3.5V3.5M505-2.1V2.1M506-2.6V2.6M507-2.4V2.4M508-3.4V3.4M509-3.2V3.2M510-4.2V4.2M511-3V3M512-2.3V2.3M513-2.2V2.2M514-4.1V4.1M515-3.7V3.7M516-2.7V2.7M517-4.5V4.5M518-3.7V3.7M519-3.9V3.9M520-4.7V4.7M521-2.5V2.5M522-4.6V4.6M523-5.1V5.1M524-3.2V3.2M525-4V4M526-3.7V3.7M527-2.8V2.8M528-4V4M529-5.2V5.2M530-3.1V3.1M531-3.3V3.3M532-4.3V4.3M533-2.9V2.9M534-3.5V3.5M535-4.1V4.1M536-5V5M537-3.5V3.5M538-3.1V3.1M539-2.9V2.9M540-5.1V5.1M541-4.8V4.8M542-3.2V3.2M543-3.7V3.7M544-3.7V3.7M545-4.7V4.7M546-3.5V3.5M547-3.1V3.1M548-5V5M549-3.8V3.8M550-3.8V3.8M551-4.4V4.4M552-3.7V3.7M553-4.5V4.5M554-3.1V3.1M555-3.6V3.6M556-4.1V4.1M557-4.7V4.7M558-5V5M559-3.2V3.2M560-3.3V3.3M561-6.1V6.1M562-5.5V5.5M563-3V3M564-3.3V3.3M565-2.9V2.9M566-3.6V3.6M567-2.7V2.7M568-3V3M569-1.9V1.9M570-1.6V1.6M571-1.7V1.7M572-2.1V2.1M573-2.3V2.3M574-2.5V2.5M575-1.8V1.8M576-1.9V1.9M577-2.1V2.1M578-2.6V2.6M579-1.3V1.3M580-1.7V1.7M581-2.2V2.2M582-2.4V2.4M583-14V14M584-10.1V10.1M585-7.4V7.4M586-7.2V7.2M587-8.4V8.4M588-7.4V7.4M589-7.3V7.3M590-8.6V8.6M591-10.6V10.6M592-11.6V11.6M593-14.3V14.3M594-11V11M595-12.8V12.8M596-13.7V13.7M597-9.9V9.9M598-13.1V13.1M599-12.9V12.9M600-8.1V8.1M601-13.9V13.9M602-10.5V10.5M603-9.2V9.2M604-8.7V8.7M605-15V15M606-9.7V9.7M607-13.7V13.7M608-14V14M609-14.9V14.9M610-12.2V12.2M611-8.7V8.7M612-8.1V8.1M613-7.8V7.8M614-13V13M615-13.5V13.5M616-13.4V13.4M617-8.1V8.1M618-10.5V10.5M619-7.4V7.4M620-9.6V9.6M621-10.3V10.3M622-9.7V9.7M623-13.7V13.7M624-14.6V14.6M625-10.1V10.1M626-9.6V9.6M627-13.4V13.4M628-7.1V7.1M629-12.8V12.8M630-7.5V7.5M631-8.5V8.5M632-13.3V13.3M633-8.1V8.1M634-10V10M635-9.6V9.6M636-8.1V8.1M637-9.9V9.9M638-11.3V11.3M639-11.6V11.6M640-6.7V6.7M641-8.9V8.9M642-11.8V11.8M643-8.6V8.6M644-11.8V11.8M645-8.6V8.6M646-11.2V11.2M647-7.6V7.6M648-12.6V12.6M649-9.4V9.4M650-11.8V11.8M651-6.9V6.9M652-10.7V10.7M653-8.3V8.3M654-8V8M655-10.2V10.2M656-8.9V8.9M657-11.1V11.1M658-5.9V5.9M659-5.4V5.4M660-6.4V6.4M661-9.3V9.3M662-7.7V7.7M663-9.1V9.1M664-10.4V10.4M665-7.8V7.8M666-8.9V8.9M667-5.6V5.6M668-9.2V9.2M669-5.9V5.9M670-9.8V9.8M671-9.4V9.4M672-8.7V8.7M673-5.9V5.9M674-9.1V9.1M675-8.1V8.1M676-7.6V7.6M677-5.1V5.1M678-8.1V8.1M679-8.5V8.5M680-7.5V7.5M681-6V6M682-5.5V5.5M683-9V9M684-5.7V5.7M685-9.4V9.4M686-9.5V9.5M687-5.6V5.6M688-8.9V8.9M689-9.2V9.2M690-9.2V9.2M691-7.4V7.4M692-7.1V7.1M693-10.8V10.8M694-11.4V11.4M695-9.6V9.6M696-7V7M697-13.2V13.2M698-8.5V8.5M699-8.5V8.5M700-10.9V10.9M701-14.8V14.8M702-9.6V9.6M703-10.1V10.1M704-11.4V11.4M705-13.6V13.6M706-15.3V15.3M707-8.9V8.9M708-14.4V14.4M709-17V17M710-14.7V14.7M711-10.7V10.7M712-9V9M713-9.1V9.1M714-9.4V9.4M715-10.3V10.3M716-15V15M717-7.7V7.7M718-13.2V13.2M719-8.7V8.7M720-9.1V9.1M721-8.9V8.9M722-7V7M723-9.4V9.4M724-11.2V11.2M725-10.5V10.5M726-8.1V8.1M727-13.9V13.9M728-8.2V8.2M729-6.8V6.8M730-6.1V6.1M731-9.9V9.9M732-5.2V5.2M733-6.7V6.7M734-5V5M735-6.5V6.5M736-7.9V7.9M737-4.9V4.9M738-4.9V4.9M739-5.7V5.7M740-9.8V9.8M741-12.8V12.8M742-5.5V5.5M743-10.5V10.5M744-9.1V9.1M745-7.3V7.3M746-6.4V6.4M747-6.6V6.6M748-5V5M749-6.8V6.8M750-5.9V5.9M751-4.9V4.9M752-5.2V5.2M753-8.5V8.5M754-8.8V8.8M755-6.3V6.3M756-8.2V8.2M757-8.7V8.7M758-8.5V8.5M759-4.7V4.7M760-5.7V5.7M761-7.8V7.8M762-6V6M763-7.1V7.1M764-8.7V8.7M765-4.4V4.4M766-8.9V8.9M767-6.9V6.9M768-8.9V8.9M769-7V7M770-12.2V12.2M771-7.9V7.9M772-7.8V7.8M773-11.1V11.1M774-11V11M775-5.9V5.9M776-7.9V7.9M777-5.2V5.2M778-7.7V7.7M779-6.7V6.7M780-5.2V5.2M781-6.9V6.9M782-4.8V4.8M783-6.1V6.1M784-7.4V7.4M785-5.4V5.4M786-8.5V8.5M787-7.7V7.7M788-4.6V4.6M789-6.6V6.6M790-7.9V7.9M791-4.7V4.7M792-5.3V5.3M793-5.7V5.7M794-5.9V5.9M795-4.3V4.3M796-6.1V6.1M797-6.6V6.6M798-5.7V5.7M799-5.4V5.4M800-11.2V11.2M801-10.8V10.8M802-7.6V7.6M803-8.1V8.1M804-5.2V5.2M805-6.7V6.7M806-7.2V7.2M807-6.3V6.3M808-6.8V6.8M809-6V6M810-4.6V4.6M811-12.2V12.2M812-7.2V7.2M813-5.5V5.5M814-4.6V4.6M815-12.1V12.1M816-6V6M817-5.5V5.5M818-6.8V6.8M819-6V6M820-6.9V6.9M821-8.5V8.5M822-4.9V4.9M823-8.5V8.5M824-7.2V7.2M825-5.5V5.5M826-8.3V8.3M827-7.3V7.3M828-4.6V4.6M829-8.6V8.6M830-8.2V8.2M831-8V8M832-8V8M833-5.9V5.9M834-4.8V4.8M835-7.4V7.4M836-7.3V7.3M837-5.2V5.2M838-6.6V6.6M839-6.6V6.6M840-7.8V7.8M841-6.4V6.4M842-7.9V7.9M843-6.5V6.5M844-7.9V7.9M845-4.4V4.4M846-8.9V8.9M847-5.1V5.1M848-4.9V4.9M849-7.5V7.5M850-6.7V6.7M851-6.1V6.1M852-7.1V7.1M853-4.5V4.5M854-6.3V6.3M855-9.1V9.1M856-7.8V7.8M857-6.5V6.5M858-6.8V6.8M859-9.1V9.1M860-8.6V8.6M861-6.2V6.2M862-7.7V7.7M863-7.4V7.4M864-5V5M865-8.7V8.7M866-5.2V5.2M867-5.6V5.6M868-5.4V5.4M869-7.7V7.7M870-4.6V4.6M871-4.5V4.5M872-5.7V5.7M873-6.9V6.9M874-6.1V6.1M875-4.4V4.4M876-4.7V4.7M877-4.8V4.8M878-4.5V4.5M879-5.6V5.6M880-4.4V4.4M881-13.3V13.3M882-6.1V6.1M883-6.7V6.7M884-13.3V13.3M885-6.8V6.8M886-7.2V7.2M887-7.7V7.7M888-4.7V4.7M889-6V6M890-5.5V5.5M891-5.2V5.2M892-4.5V4.5M893-6.8V6.8M894-6V6M895-5.7V5.7M896-8.2V8.2M897-6.2V6.2M898-6V6M899-7.9V7.9M900-8V8M901-4.8V4.8M902-5V5M903-5.9V5.9M904-5.5V5.5M905-4.1V4.1M906-11.1V11.1M907-7V7M908-6.1V6.1M909-6.5V6.5M910-12V12M911-6.4V6.4M912-5V5M913-12.8V12.8M914-4.9V4.9M915-5.4V5.4M916-12.9V12.9M917-5V5M918-7.6V7.6M919-5.1V5.1M920-7.5V7.5M921-8V8M922-4.7V4.7M923-6V6M924-4.5V4.5M925-4.4V4.4M926-4.2V4.2M927-7V7M928-5.1V5.1M929-5.5V5.5M930-5.7V5.7M931-13.4V13.4M932-5.5V5.5M933-7.5V7.5M934-6.6V6.6M935-4.6V4.6M936-11.2V11.2M937-5.6V5.6M938-5.9V5.9M939-5.8V5.8M940-7.2V7.2M941-5.5V5.5M942-13.7V13.7M943-4.1V4.1M944-4.2V4.2M945-7.5V7.5M946-8.5V8.5M947-8.2V8.2M948-8.8V8.8M949-9.3V9.3M950-12.9V12.9M951-13.1V13.1M952-11.5V11.5M953-9.2V9.2M954-8.4V8.4M955-16.7V16.7M956-12.5V12.5M957-13.9V13.9M958-15.2V15.2M959-12.8V12.8M960-11.8V11.8M961-14.2V14.2M962-16.9V16.9M963-18.5V18.5M964-12.6V12.6M965-14.3V14.3M966-14.8V14.8M967-16.4V16.4M968-17.6V17.6M969-12.6V12.6M970-17.5V17.5M971-14.2V14.2M972-11.5V11.5M973-14.6V14.6M974-17.7V17.7M975-15.2V15.2M976-14.3V14.3M977-9.5V9.5M978-17.5V17.5M979-14V14M980-11.8V11.8M981-16.4V16.4M982-12V12M983-15.7V15.7M984-8.5V8.5M985-15.9V15.9M986-10.9V10.9M987-13.8V13.8M988-9.7V9.7M989-9.6V9.6M990-10V10M991-8.8V8.8M992-7.5V7.5M993-10.3V10.3M994-7.5V7.5M995-8.4V8.4M996-13.3V13.3M997-12.9V12.9M998-10.4V10.4M999-8.3V8.3M1000-14.9V14.9M1001-13.5V13.5M1002-8V8M1003-9.7V9.7M1004-14.4V14.4M1005-9.9V9.9M1006-10.4V10.4M1007-9.2V9.2M1008-11.9V11.9M1009-14.5V14.5M1010-15.8V15.8M1011-14.4V14.4M1012-9.9V9.9M1013-16.7V16.7M1014-10.9V10.9M1015-18V18M1016-16.9V16.9M1017-9.1V9.1M1018-15V15M1019-8.6V8.6M1020-11.1V11.1M1021-13.7V13.7M1022-15.4V15.4M1023-11V11M1024-14.4V14.4M1025-10.3V10.3M1026-15.3V15.3M1027-9.1V9.1M1028-9.1V9.1M1029-8.5V8.5M1030-13.2V13.2M1031-14.9V14.9M1032-10.3V10.3M1033-12V12M1034-13.1V13.1M1035-13.9V13.9M1036-7.9V7.9M1037-12.8V12.8M1038-7.1V7.1M1039-10.8V10.8M1040-13.1V13.1M1041-12.9V12.9M1042-9.2V9.2M1043-12.2V12.2M1044-8.4V8.4M1045-8.9V8.9M1046-10.5V10.5M1047-8V8M1048-16.4V16.4M1049-15.5V15.5M1050-11.1V11.1M1051-16.7V16.7M1052-13.6V13.6M1053-9.4V9.4M1054-12.6V12.6M1055-12.5V12.5M1056-15.6V15.6M1057-18V18M1058-15.1V15.1M1059-15.2V15.2M1060-10.5V10.5M1061-9.8V9.8M1062-12.8V12.8M1063-9.6V9.6M1064-13.1V13.1M1065-12.1V12.1M1066-13.6V13.6M1067-10.6V10.6M1068-12V12M1069-9.1V9.1M1070-8.8V8.8M1071-14.8V14.8M1072-10.7V10.7M1073-9.7V9.7M1074-11V11M1075-15.7V15.7M1076-9.4V9.4M1077-11V11M1078-10V10M1079-8.9V8.9M1080-13.7V13.7M1081-9.2V9.2M1082-10.1V10.1M1083-13.4V13.4M1084-12.9V12.9M1085-8.2V8.2M1086-13.1V13.1M1087-15.2V15.2M1088-9.4V9.4M1089-8.2V8.2M1090-8.6V8.6M1091-8.9V8.9M1092-14.4V14.4M1093-12V12M1094-8V8M1095-7.9V7.9M1096-13.8V13.8M1097-15V15M1098-13.6V13.6M1099-8.8V8.8M1100-12.8V12.8M1101-14.7V14.7M1102-15V15M1103-13.6V13.6M1104-12.3V12.3M1105-8.1V8.1M1106-15.8V15.8M1107-15.9V15.9M1108-12.6V12.6M1109-11.2V11.2M1110-11.4V11.4M1111-10.5V10.5M1112-14.5V14.5M1113-11.6V11.6M1114-9.6V9.6M1115-11.6V11.6M1116-14.3V14.3M1117-16V16M1118-12.5V12.5M1119-13.1V13.1M1120-14.5V14.5M1121-11.3V11.3M1122-15V15M1123-11.6V11.6M1124-15.4V15.4M1125-16.7V16.7M1126-12V12M1127-17.3V17.3M1128-17.7V17.7M1129-14.1V14.1M1130-8.9V8.9M1131-12.3V12.3M1132-11.7V11.7M1133-12.6V12.6M1134-9.7V9.7M1135-15.2V15.2M1136-8.8V8.8M1137-12V12M1138-14.1V14.1M1139-9.1V9.1M1140-9.6V9.6M1141-12.5V12.5M1142-10.5V10.5M1143-12.3V12.3M1144-10V10M1145-14.7V14.7M1146-14.9V14.9M1147-9.1V9.1M1148-12.2V12.2M1149-13V13M1150-8.4V8.4M1151-10.9V10.9M1152-15.3V15.3M1153-13.1V13.1M1154-12.4V12.4M1155-14.6V14.6M1156-10.5V10.5M1157-14.2V14.2M1158-9.9V9.9M1159-11.9V11.9M1160-16V16M1161-9.8V9.8M1162-14.6V14.6M1163-10.1V10.1M1164-13.8V13.8M1165-11.7V11.7M1166-10.6V10.6M1167-8.6V8.6M1168-13.1V13.1M1169-11.5V11.5M1170-7.7V7.7M1171-8.6V8.6M1172-9.9V9.9M1173-11.2V11.2M1174-8.6V8.6M1175-11V11M1176-10.6V10.6M1177-13.9V13.9M1178-14V14M1179-11.2V11.2M1180-11.5V11.5M1181-8.6V8.6M1182-8.9V8.9M1183-12V12M1184-12.3V12.3M1185-10.7V10.7M1186-8.2V8.2M1187-10.5V10.5M1188-13V13M1189-13.1V13.1M1190-9V9M1191-11V11M1192-8.5V8.5M1193-8.1V8.1M1194-10.2V10.2M1195-12.8V12.8M1196-11.8V11.8M1197-9.5V9.5M1198-14V14M1199-14.3V14.3M1200-11.4V11.4M1201-11.7V11.7M1202-11.1V11.1M1203-11.4V11.4M1204-10.3V10.3M1205-8.8V8.8M1206-13V13M1207-11.2V11.2M1208-14.9V14.9M1209-11.1V11.1M1210-7.7V7.7M1211-11.1V11.1M1212-13.6V13.6M1213-14.5V14.5M1214-10.1V10.1M1215-12.8V12.8M1216-14.2V14.2M1217-13.7V13.7M1218-13.5V13.5M1219-12V12M1220-12.7V12.7M1221-11V11M1222-11.3V11.3M1223-11V11M1224-12.5V12.5M1225-13.1V13.1M1226-8V8M1227-13.4V13.4M1228-12.8V12.8M1229-7.9V7.9M1230-10.7V10.7M1231-8.2V8.2M1232-6.5V6.5M1233-12.1V12.1M1234-8.9V8.9M1235-10.3V10.3M1236-9.8V9.8M1237-11.3V11.3M1238-6.1V6.1M1239-6.7V6.7M1240-6.6V6.6M1241-8.7V8.7M1242-8.8V8.8M1243-8.7V8.7M1244-10V10M1245-10.3V10.3M1246-8.5V8.5M1247-10.1V10.1M1248-10V10M1249-5.3V5.3M1250-8.8V8.8M1251-9.1V9.1M1252-9.4V9.4M1253-6.2V6.2M1254-7.9V7.9M1255-7.3V7.3M1256-7.2V7.2M1257-9.3V9.3M1258-8.1V8.1M1259-8.8V8.8M1260-5.9V5.9M1261-4.9V4.9M1262-5.3V5.3M1263-7.9V7.9M1264-7.2V7.2M1265-7.3V7.3M1266-4.4V4.4M1267-5.5V5.5M1268-6.2V6.2M1269-6.9V6.9M1270-3.9V3.9M1271-3.5V3.5M1272-5.4V5.4M1273-5.4V5.4M1274-4.1V4.1M1275-4V4M1276-3.2V3.2M1277-5.6V5.6M1278-4.7V4.7M1279-5.6V5.6M1280-4.7V4.7M1281-3.4V3.4M1282-3V3M1283-4.2V4.2M1284-4.4V4.4M1285-3.4V3.4M1286-4.1V4.1M1287-3.8V3.8M1288-2.2V2.2M1289-4.4V4.4M1290-4.2V4.2M1291-2.9V2.9M1292-2.6V2.6M1293-3.1V3.1M1294-1.8V1.8M1295-2.6V2.6M1296-2.6V2.6M1297-3V3M1298-2.9V2.9M1299-2.4V2.4M1300-1.6V1.6M1301-1.7V1.7M1302-1.7V1.7M1303-1.3V1.3M1304-1.5V1.5M1305-1.2V1.2M1306-1.3V1.3M1307-1.1V1.1M1308-1.3V1.3M1309-1.4V1.4M1310-1.3V1.3M1311-1.4V1.4M1312-1.2V1.2M1313-0.7V0.7M1314-0.9V0.9M1315-0.9V0.9" stroke="#26ab76" stroke-width="1.050"/></g></svg>
<!-- sidebar -->
<div class="a" style="left:0;top:106px;width:239px;height:784px;background:#222"></div>
<div class="hl" style="left:0;top:146px;width:238px"></div>
<div class="hl" style="left:14px;top:186px;width:214px"></div>
<svg style="left:212.700px;top:161.6px" width="11" height="8"><use href="#chev"/></svg>
<div class="hl" style="left:14px;top:226px;width:214px"></div>
<svg style="left:212.700px;top:201.6px" width="11" height="8"><use href="#chev"/></svg>
<div class="hl" style="left:14px;top:266px;width:214px"></div>
<svg style="left:212.700px;top:241.6px" width="11" height="8"><use href="#chev"/></svg>
<div class="hl" style="left:14px;top:306px;width:214px"></div>
<svg style="left:212.700px;top:281.6px" width="11" height="8"><use href="#chev"/></svg>
<div class="hl" style="left:0;top:362px;width:238px"></div>
<div class="hl" style="left:0;top:402px;width:238px"></div>
<svg style="left:196.500px;top:335.800px" width="13" height="12" viewBox="0 0 13 12" fill="#fff"><rect y="0" width="13" height="2.400" rx=".7"/><rect y="4.300" width="13" height="2.400" rx=".7"/><rect y="8.600" width="13" height="2.400" rx=".7"/></svg>
<svg style="left:9.600px;top:374.400px" width="19" height="18" viewBox="0 0 19 18"><circle cx="7.500" cy="7.300" r="5.700" fill="none" stroke="#fff" stroke-width="2.500"/><path d="M11.800 11.600l5.200 5" stroke="#fff" stroke-width="2.900" stroke-linecap="round"/></svg>
<div class="a g" style="left:53px;top:459px;width:99px;height:34px;border-radius:3px 0 0 3px"></div>
<div class="a g" style="left:153px;top:459px;width:30px;height:34px;border-radius:0 3px 3px 0"></div>
<svg style="left:163.800px;top:474.200px" width="9" height="5"><path d="M0 0h8.800l-4.400 5z" fill="#fff"/></svg>
<div class="a" style="left:53px;top:503px;width:131px;height:34px;border:2px solid #58d9a5;border-top:2px solid #1f7a57;background:linear-gradient(#5bd5a5 0%,#52c497 22%,#3aa67c 45%,#26885f 70%,#196b4c 100%)"></div>
<svg style="left:65px;top:513.400px" width="9.700" height="12.100" viewBox="30 0 388 512" preserveAspectRatio="none"><use href="#bolt" fill="#fff"/></svg>
<!-- player -->
<div class="a g" style="left:0;top:890px;width:1902px;height:54px"></div>
<div class="a" style="left:239px;top:926px;width:1420px;height:4px;background:#fff"></div>
<svg style="left:54.400px;top:913.900px" width="9.600" height="10" viewBox="0 0 10.200 10.800" preserveAspectRatio="none" fill="#fff"><rect x="0" y="0" width="2.400" height="10.800" rx=".6"/><path d="M10.200 0.800v9.200a.7.700 0 0 1-1.100.500L2.500 5.900a.7.700 0 0 1 0-1L9.100.300a.7.700 0 0 1 1.100.500z"/></svg>
<svg style="left:111.400px;top:910.600px" width="16" height="18" viewBox="0 0 17 18.600" preserveAspectRatio="none" fill="#fff"><path d="M0 2.200a2 2 0 0 1 3-1.750l12.900 7.100a2 2 0 0 1 0 3.500L3 18.150A2 2 0 0 1 0 16.400z"/></svg>
<svg style="left:174.300px;top:913.900px" width="9.400" height="10" viewBox="0 0 10.200 10.800" preserveAspectRatio="none" fill="#fff"><rect x="7.800" y="0" width="2.400" height="10.800" rx=".6"/><path d="M0 0.800v9.200a.7.700 0 0 0 1.100.500l6.600-4.600a.7.700 0 0 0 0-1L1.100.300a.7.700 0 0 0-1.100.500z"/></svg>
<svg style="left:1694px;top:912.500px" width="15" height="14.700" viewBox="0 0 15 14.700"><path d="M7.600 0v9.600M3.400 6l4.200 4.200L11.800 6" fill="none" stroke="#fff" stroke-width="1.900"/><path d="M2.300 9.900h2.300l3 2.400l3-2.400h2.100a2.350 2.350 0 0 1 0 4.700H2.300a2.350 2.350 0 0 1 0-4.700z" fill="#fff"/><circle cx="12.400" cy="12.300" r=".8" fill="#26ab76"/></svg>
<svg style="left:1741.200px;top:912.500px" width="11.400" height="14.200" viewBox="30 0 388 512" preserveAspectRatio="none"><use href="#bolt" fill="#fff"/></svg>
<svg style="left:1785px;top:914.200px" width="13.100" height="11" viewBox="0 0 12.600 11.700" preserveAspectRatio="none" fill="#fff"><use href="#bars"/></svg>
<svg style="left:1827.300px;top:913px" width="18.400" height="13.400" viewBox="0 0 18.500 15.500" preserveAspectRatio="none"><path d="M0 5.200h3.300L7.600 1a.6.600 0 0 1 1 .4v12.700a.6.600 0 0 1-1 .4L3.300 10.300H0a.6.600 0 0 1-.6-.6V5.800A.6.600 0 0 1 0 5.200z" fill="#fff" transform="translate(.6,0)"/><path d="M11 5.200a3.200 3.200 0 0 1 0 5.100M13.200 2.900a6.300 6.300 0 0 1 0 9.700M15.400 .8a9.400 9.400 0 0 1 0 13.900" fill="none" stroke="#fff" stroke-width="1.500" stroke-linecap="round"/></svg>
<svg style="left:1875px;top:914px" width="13.500" height="11" viewBox="0 0 13.500 11"><path d="M0.200 5.500h8.800M5.400 1.300l4.200 4.200l-4.200 4.200" fill="none" stroke="#fff" stroke-width="2"/><path d="M12.400 0.300v10.400" stroke="#6fcda6" stroke-width="1.100"/></svg>
<!-- texts -->
<div class="t" style="left:182.0px;top:21px;font-size:13px;transform:scaleX(1.0249);transform-origin:0 0;">Search 28,579 tracks by keywords, audio file, or URL</div>
<div class="t" style="left:1552.5px;top:9px;font-size:13px;transform:scaleX(0.9236);transform-origin:0 0;">Styles</div>
<div class="t" style="left:1549.6px;top:31px;font-size:13px;transform:scaleX(0.9864);transform-origin:0 0;">Moods</div>
<div class="t" style="left:1704.1px;top:21px;font-size:12px;transform:scaleX(0.9610);transform-origin:0 0;">LOG IN</div>
<div class="t" style="left:1817.5px;top:21px;font-size:12px;transform:scaleX(0.8705);transform-origin:0 0;">REGISTER</div>
<div class="t b" style="left:14.4px;top:119px;font-size:16px;transform:scaleX(0.9769);transform-origin:0 0;">Filter Tracks</div>
<div class="t" style="left:14.0px;top:159px;font-size:14px;transform:scaleX(0.9317);transform-origin:0 0;">Style</div>
<div class="t" style="left:14.0px;top:199px;font-size:14px;transform:scaleX(0.9635);transform-origin:0 0;">Genre</div>
<div class="t" style="left:14.0px;top:239px;font-size:14px;transform:scaleX(1.0112);transform-origin:0 0;">Tempo</div>
<div class="t" style="left:14.0px;top:279px;font-size:14px;transform:scaleX(1.0134);transform-origin:0 0;">Mood</div>
<div class="t b" style="left:14.3px;top:335px;font-size:16px;transform:scaleX(0.9650);transform-origin:0 0;">My Playlists</div>
<div class="t" style="left:43.5px;top:377px;font-size:13px;transform:scaleX(1.0099);transform-origin:0 0;">Search Playlists</div>
<div class="t" style="left:14.3px;top:416px;font-size:13px;transform:scaleX(1.0352);transform-origin:0 0;">Create an account or Log In to</div>
<div class="t" style="left:14.3px;top:434px;font-size:13px;transform:scaleX(1.0062);transform-origin:0 0;">use Playlists</div>
<div class="t" style="left:62.6px;top:470px;font-size:12px;transform:scaleX(0.9252);transform-origin:0 0;">NEW PLAYLIST</div>
<div class="t" style="left:78.7px;top:514px;font-size:12px;transform:scaleX(0.9265);transform-origin:0 0;">NEW AI PLAYLIST</div>
<div class="t" style="left:259.6px;top:190px;font-size:17px;transform:scaleX(0.9491);transform-origin:0 0;">PLAYLISTS</div>
<div class="t" style="left:385.2px;top:190px;font-size:17px;transform:scaleX(0.9265);transform-origin:0 0;">TRACKS</div>
<div class="t" style="left:489.6px;top:190px;font-size:17px;transform:scaleX(1.0183);transform-origin:0 0;">ALBUMS</div>
<div class="t" style="left:601.3px;top:190px;font-size:17px;transform:scaleX(1.0228);transform-origin:0 0;">ABOUT</div>
<div class="t" style="left:702.0px;top:190px;font-size:17px;transform:scaleX(0.9879);transform-origin:0 0;">FAQs</div>
<div class="t" style="left:785.0px;top:190px;font-size:17px;transform:scaleX(0.9947);transform-origin:0 0;">BLOG</div>
<div class="t" style="left:873.0px;top:190px;font-size:17px;transform:scaleX(0.9373);transform-origin:0 0;">ARTISTS</div>
<div class="t" style="left:980.0px;top:190px;font-size:17px;transform:scaleX(0.9471);transform-origin:0 0;">GENRES</div>
<div class="t" style="left:1088.0px;top:190px;font-size:17px;transform:scaleX(1.0654);transform-origin:0 0;">Catalogs</div>
<div class="t b" style="left:259.6px;top:232px;font-size:20px;transform:scaleX(1.0163);transform-origin:0 0;">All Tracks (28,579)</div>
<div class="t b" style="left:259.0px;top:281px;font-size:13px;transform:scaleX(1.0115);transform-origin:0 0;">Sort</div>
<div class="t" style="left:299.0px;top:281px;font-size:13px;color:#f0f5f2;transform:scaleX(1.0383);transform-origin:0 0;">Title</div>
<div class="t b" style="left:971.5px;top:281px;font-size:13px;transform:scaleX(1.0582);transform-origin:0 0;">View</div>
<div class="t" style="left:1008.0px;top:281px;font-size:13px;transform:scaleX(1.0264);transform-origin:0 0;text-decoration:underline">Simple</div>
<div class="t" style="left:1053.9px;top:281px;font-size:13px;">Wave</div>
<div class="t b" style="left:1696.7px;top:281px;font-size:13px;transform:scaleX(0.9846);transform-origin:0 0;">Page</div>
<div class="t" style="left:1742.6px;top:281px;font-size:13px;color:#eef5f1;">1</div>
<div class="t" style="left:1771.5px;top:281px;font-size:13px;transform:scaleX(0.9222);transform-origin:0 0;">...</div>
<div class="t" style="left:1795.0px;top:281px;font-size:13px;transform:scaleX(1.0137);transform-origin:0 0;">266</div>
<div class="t" style="left:1835.0px;top:281px;font-size:13px;transform:scaleX(1.0378);transform-origin:0 0;">Next »</div>
<div class="t b" style="left:251.0px;top:321px;font-size:13px;transform:scaleX(1.0093);transform-origin:0 0;">Play</div>
<div class="t b" style="left:362.3px;top:321px;font-size:13px;transform:scaleX(1.0642);transform-origin:0 0;">Title</div>
<div class="t b" style="left:685.7px;top:321px;font-size:13px;transform:scaleX(0.9899);transform-origin:0 0;">BPM</div>
<div class="t b" style="left:721.5px;top:321px;font-size:13px;transform:scaleX(1.0481);transform-origin:0 0;">Album</div>
<div class="t b" style="left:988.1px;top:321px;font-size:13px;transform:scaleX(1.0573);transform-origin:0 0;">Artist</div>
<div class="t b" style="left:1254.3px;top:321px;font-size:13px;transform:scaleX(1.0458);transform-origin:0 0;">Genre</div>
<div class="t b" style="left:1520.5px;top:321px;font-size:13px;transform:scaleX(1.0417);transform-origin:0 0;">Description</div>
<div class="t b" style="left:1787.0px;top:321px;font-size:13px;transform:scaleX(1.0215);transform-origin:0 0;">Add To Cart</div>
<div class="t" style="left:362.2px;top:371px;font-size:13px;transform:scaleX(0.9826);transform-origin:0 0;">MOON CHILL</div>
<div class="t" style="left:659.5px;top:371px;font-size:12px;color:#e6f5ee;transform:scaleX(0.9498);transform-origin:0 0;">+2</div>
<div class="t" style="left:692.9px;top:371px;font-size:13px;transform:scaleX(1.0367);transform-origin:0 0;">65</div>
<div class="t" style="left:721.5px;top:371px;font-size:13px;transform:scaleX(0.9339);transform-origin:0 0;">ELECTRONIC CHILL OUT</div>
<div class="t" style="left:988.1px;top:371px;font-size:13px;transform:scaleX(1.0219);transform-origin:0 0;">Amazing Music Tracks</div>
<div class="t" style="left:1254.3px;top:371px;font-size:13px;transform:scaleX(1.0372);transform-origin:0 0;">Electronic</div>
<div class="t" style="left:1520.7px;top:360px;font-size:13px;transform:scaleX(1.0374);transform-origin:0 0;">Vocal chops call out, drums groove, and a</div>
<div class="t" style="left:1520.7px;top:378px;font-size:13px;transform:scaleX(1.0514);transform-origin:0 0;">dreamy, bubbly synth arp plays. Playful,</div>
<div class="t" style="left:1872.8px;top:447px;font-size:12px;color:#e8e8e8;transform:scaleX(0.9418);transform-origin:0 0;">2:12</div>
<div class="t" style="left:362.2px;top:491px;font-size:13px;transform:scaleX(0.9611);transform-origin:0 0;">CHILL OUT</div>
<div class="t" style="left:659.5px;top:491px;font-size:12px;color:#e6f5ee;transform:scaleX(0.9498);transform-origin:0 0;">+2</div>
<div class="t" style="left:692.9px;top:491px;font-size:13px;transform:scaleX(1.0367);transform-origin:0 0;">72</div>
<div class="t" style="left:721.5px;top:491px;font-size:13px;transform:scaleX(0.9339);transform-origin:0 0;">ELECTRONIC CHILL OUT</div>
<div class="t" style="left:988.1px;top:491px;font-size:13px;transform:scaleX(1.0219);transform-origin:0 0;">Amazing Music Tracks</div>
<div class="t" style="left:1254.3px;top:491px;font-size:13px;transform:scaleX(1.0372);transform-origin:0 0;">Electronic</div>
<div class="t" style="left:1520.7px;top:480px;font-size:13px;transform:scaleX(1.0505);transform-origin:0 0;">Drums lay down a chill groove while</div>
<div class="t" style="left:1520.7px;top:498px;font-size:13px;transform:scaleX(1.0359);transform-origin:0 0;">dreamy synths create a cool vibe. Lo-fi,</div>
<div class="t" style="left:1872.8px;top:567px;font-size:12px;color:#e8e8e8;transform:scaleX(0.9418);transform-origin:0 0;">1:46</div>
<div class="t" style="left:362.2px;top:611px;font-size:13px;transform:scaleX(0.9844);transform-origin:0 0;">CHILL MAN</div>
<div class="t" style="left:659.5px;top:611px;font-size:12px;color:#e6f5ee;transform:scaleX(0.9498);transform-origin:0 0;">+3</div>
<div class="t" style="left:692.9px;top:611px;font-size:13px;transform:scaleX(1.0367);transform-origin:0 0;">80</div>
<div class="t" style="left:721.5px;top:611px;font-size:13px;transform:scaleX(0.9339);transform-origin:0 0;">ELECTRONIC CHILL OUT</div>
<div class="t" style="left:988.1px;top:611px;font-size:13px;transform:scaleX(1.0219);transform-origin:0 0;">Amazing Music Tracks</div>
<div class="t" style="left:1254.3px;top:611px;font-size:13px;transform:scaleX(1.0372);transform-origin:0 0;">Electronic</div>
<div class="t" style="left:1520.7px;top:600px;font-size:13px;transform:scaleX(1.0535);transform-origin:0 0;">Chill lofi-beat with snaps, drums, and</div>
<div class="t" style="left:1520.7px;top:618px;font-size:13px;transform:scaleX(1.0436);transform-origin:0 0;">electric guitars. Perfect for vlogs.</div>
<div class="t" style="left:1872.8px;top:687px;font-size:12px;color:#e8e8e8;transform:scaleX(0.9418);transform-origin:0 0;">1:48</div>
<div class="t" style="left:362.2px;top:731px;font-size:13px;transform:scaleX(0.9486);transform-origin:0 0;">AMT ABEYANCE</div>
<div class="t" style="left:659.5px;top:731px;font-size:12px;color:#e6f5ee;transform:scaleX(0.9498);transform-origin:0 0;">+3</div>
<div class="t" style="left:689.4px;top:731px;font-size:13px;transform:scaleX(1.0610);transform-origin:0 0;">112</div>
<div class="t" style="left:721.5px;top:731px;font-size:13px;transform:scaleX(0.9602);transform-origin:0 0;">DRAMATIC TENSION</div>
<div class="t" style="left:988.1px;top:731px;font-size:13px;transform:scaleX(1.0219);transform-origin:0 0;">Amazing Music Tracks</div>
<div class="t" style="left:1254.3px;top:731px;font-size:13px;transform:scaleX(1.0560);transform-origin:0 0;">Drama</div>
<div class="t" style="left:1520.7px;top:720px;font-size:13px;transform:scaleX(1.0586);transform-origin:0 0;">Dramatic suspenseful ambient orchestra</div>
<div class="t" style="left:1520.7px;top:738px;font-size:13px;transform:scaleX(1.0659);transform-origin:0 0;">with far off vocal into pulsing orchestra,</div>
<div class="t" style="left:1872.8px;top:807px;font-size:12px;color:#e8e8e8;transform:scaleX(0.9418);transform-origin:0 0;">2:04</div>
<div class="t" style="left:362.2px;top:851px;font-size:13px;transform:scaleX(0.9511);transform-origin:0 0;">LIGHTS OF HOME</div>
<div class="t" style="left:659.5px;top:851px;font-size:12px;color:#e6f5ee;transform:scaleX(0.9498);transform-origin:0 0;">+2</div>
<div class="t" style="left:689.4px;top:851px;font-size:13px;transform:scaleX(1.0137);transform-origin:0 0;">109</div>
<div class="t" style="left:721.5px;top:851px;font-size:13px;transform:scaleX(0.9467);transform-origin:0 0;">WORLD TRIBAL</div>
<div class="t" style="left:988.1px;top:851px;font-size:13px;transform:scaleX(1.0219);transform-origin:0 0;">Amazing Music Tracks</div>
<div class="t" style="left:1254.3px;top:851px;font-size:13px;transform:scaleX(1.0559);transform-origin:0 0;">World / Ethnic</div>
<div class="t" style="left:1520.7px;top:840px;font-size:13px;transform:scaleX(1.0490);transform-origin:0 0;">A magical atmosphere is created by soft</div>
<div class="t" style="left:1520.7px;top:858px;font-size:13px;transform:scaleX(1.0481);transform-origin:0 0;">wooden mallets, carved flutes, and</div>
<div class="t" style="left:238.9px;top:906px;font-size:12px;transform:scaleX(1.0375);transform-origin:0 0;">No track selected</div>
<div class="t" style="left:1607.2px;top:906px;font-size:12px;color:#a8dcc6;transform:scaleX(1.0189);transform-origin:0 0;">0:00</div>
<div class="t" style="left:1631.0px;top:906px;font-size:12px;transform:scaleX(1.0561);transform-origin:0 0;">/0:00</div>
</body></html>
